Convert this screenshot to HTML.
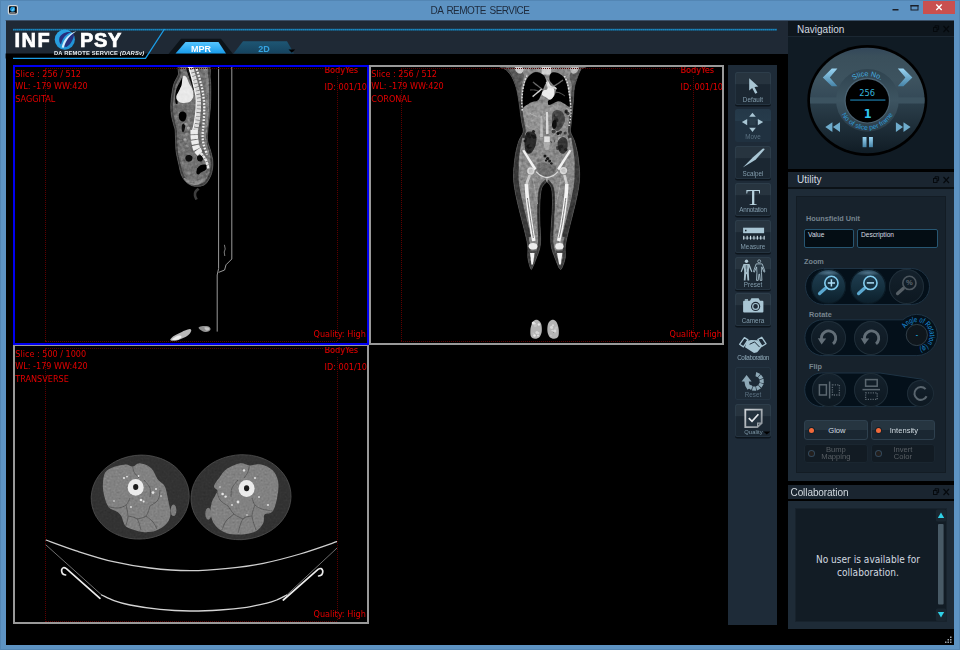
<!DOCTYPE html>
<html lang="en">
<head>
<meta charset="utf-8">
<title>DA REMOTE SERVICE</title>
<style>
*{box-sizing:border-box;margin:0;padding:0}
html,body{width:960px;height:650px;overflow:hidden;background:#5d93c3;font-family:"Liberation Sans",sans-serif}
.abs{position:absolute}
#win{position:absolute;left:0;top:0;width:960px;height:650px;background:#5d93c3;overflow:hidden;box-shadow:inset 0 0 0 1px #5386b4}
#client{position:absolute;left:5.6px;top:21px;width:948.4px;height:624px;background:#000}
#header{position:absolute;left:5.6px;top:21px;width:782.4px;height:32.6px;background:#1f2935}

#titletext{position:absolute;left:0;top:4.5px;width:960px;text-align:center;font-size:10px;line-height:12px;color:#1d2a3c;letter-spacing:-0.55px;word-spacing:1.4px}
#hdrsvg{position:absolute;left:0;top:0}
.logo{position:absolute;color:#fff;-webkit-text-stroke:0.7px #fff;font-weight:700;font-size:20px;line-height:20px;letter-spacing:1.5px;top:29.5px}
#sub{position:absolute;left:54px;top:49.5px;color:#e8eef2;font-weight:700;font-size:5.8px;line-height:7px;letter-spacing:0.15px;white-space:nowrap}
.tabt{position:absolute;font-weight:700;font-size:9px;line-height:10px;top:43.5px;text-align:center}
/* viewports */
.vp{position:absolute;background:#000;border:2px solid #999;overflow:hidden}
.vp.sel{border-color:#0000f0}
.vp .t{position:absolute;color:#e40000;font-size:9px;line-height:11px;white-space:nowrap;font-family:"DejaVu Sans Condensed","DejaVu Sans","Liberation Sans",sans-serif}
.vp .dl{position:absolute;border-left:1px dotted #5c0000;top:2px;bottom:2px;width:0}
.vp .dh{position:absolute;border-top:1px dotted #5c0000;left:30px;right:30px;height:0}
.vp svg{position:absolute;left:0;top:0}
/* toolbar */
#toolbar{position:absolute;left:728px;top:65px;width:49px;height:560px;background:#1e2b38}
.tb{position:absolute;left:735px;width:36px;height:33px;border-radius:2.5px;background:linear-gradient(#27343f 0,#27343f 37%,#1b2732 38%,#1b2732 100%);box-shadow:inset 0 0 0 1px rgba(70,95,112,0.22),0 1.5px 0 #0d151c}
.tb.flat{background:linear-gradient(#243848 0,#263b4b 36%,#203140 37%,#203140 100%);box-shadow:none}
.tb.dis{background:#1d2a36;box-shadow:inset 0 0 0 1px rgba(50,70,86,0.35)}
.tb.none{background:none;box-shadow:none}
.tb span{position:absolute;left:-8px;right:-8px;bottom:2.3px;text-align:center;font-size:6.3px;color:#849eae;line-height:6px;white-space:nowrap;letter-spacing:0.05px}
.tb.flat span,.tb.dis span{color:#5a7080}
.tb svg{position:absolute;left:0;top:0}
/* dock */
.dock{position:absolute;left:788px;width:166px;background:#1e2b37}
.dtitle{position:absolute;left:788px;width:166px;height:16px;background:#1a2530;color:#d3dae0;font-size:10px;line-height:15px;padding-left:9px;white-space:nowrap}
.dtitle svg{position:absolute;right:3px;top:4px}
.lbl{position:absolute;font-weight:700;font-size:7.3px;line-height:8px;color:#76848f;white-space:nowrap}
.tbox{position:absolute;height:19px;border:1px solid #275672;border-radius:2px;background:#040d14;color:#d6dde2;font-size:6.6px;line-height:8px;padding:1px 0 0 3px}
.pill{position:absolute;background:#04101a;border:1px solid #1e3344}
.cb{position:absolute;border-radius:50%}
.cb.on{background:radial-gradient(ellipse 38% 9% at 50% 11%,rgba(120,160,185,0.55),rgba(120,160,185,0) 100%),linear-gradient(#224054 0,#15303f 55%,#0c1e2a 100%);box-shadow:inset 0 0 0 1px rgba(10,24,34,0.9)}
.cb.off{background:linear-gradient(#14212c,#0d1821);box-shadow:inset 0 0 0 1px #1f2e39}
.cb svg{position:absolute;left:0;top:0}
.ub{position:absolute;height:20px;border-radius:3px;font-size:7.6px;line-height:8px;text-align:center;white-space:nowrap}
.ub.on{background:linear-gradient(#263540 0,#263540 50%,#1a2732 51%,#1a2732 100%);border:1px solid #2e404e;color:#d0dae0}
.ub.off{background:#121b23;border:1px solid #1a2630;color:#595f64}
.ub i{position:absolute;left:3.6px;top:6.4px;width:5px;height:5px;border-radius:50%}
.ub.on i{background:#f26a3a;box-shadow:0 0 0 1px #14202a}
.ub.off i{background:#231f1d;box-shadow:0 0 0 1px #33485a}
</style>
</head>
<body>
<div id="win">
  <div id="titletext">DA REMOTE SERVICE</div>
  <div id="client"></div>
  <div id="header"></div>
  <svg id="hdrsvg" width="960" height="66" viewBox="0 0 960 66">
    <defs>
      <linearGradient id="gMpr" x1="0" y1="0" x2="0" y2="1"><stop offset="0" stop-color="#56c6ff"/><stop offset="1" stop-color="#189ae8"/></linearGradient>
      <linearGradient id="g2d" x1="0" y1="0" x2="0" y2="1"><stop offset="0" stop-color="#1e5674"/><stop offset="1" stop-color="#16435e"/></linearGradient>
      <linearGradient id="gO" x1="0" y1="0" x2="1" y2="1"><stop offset="0" stop-color="#2ea7e6"/><stop offset="1" stop-color="#1d8fd2"/></linearGradient>
    </defs>
    <!-- window icon -->
    <rect x="8.4" y="5.6" width="9" height="8.6" rx="1.6" fill="#04070a" stroke="#d3d8dc" stroke-width="1.2"/>
    <circle cx="12.6" cy="9.2" r="2.5" fill="#1c94d8"/><path d="M11.2 10.6 L14.8 7 L13.2 10.9 Z" fill="#6fd0f8"/>
    <rect x="9.6" y="12.2" width="5.8" height="0.8" fill="#8a9096"/>
    <!-- window buttons -->
    <rect x="892.5" y="9" width="6" height="1.5" fill="#1a1f28"/>
    <rect x="911" y="5.5" width="7" height="4.5" fill="none" stroke="#1a1f28" stroke-width="1"/><rect x="910.5" y="5" width="8" height="1.5" fill="#1a1f28"/>
    <rect x="923" y="1" width="32" height="13" fill="#c9504f"/>
    <path d="M936.3 4.6 L941.7 10 M941.7 4.6 L936.3 10" stroke="#fff" stroke-width="1.4" fill="none"/>
    <rect x="5.6" y="20" width="948.4" height="1" fill="#3a5068"/>
    <!-- black strip under logo -->
    <polygon points="5.6,53.6 148,53.6 145,58.5 5.6,58.5" fill="#000"/>
    <!-- thin dashed blue line -->
    <line x1="13" y1="29.6" x2="777" y2="29.6" stroke="#176c9a" stroke-width="1.9"/><line x1="13" y1="29.6" x2="777" y2="29.6" stroke="#1c86bd" stroke-width="1.1" stroke-dasharray="1.2 0.8"/>
    <!-- logo outline -->
    <path d="M164.5 29 L145.5 58.3 L13 58.3" stroke="#1b9ee8" stroke-width="1.3" fill="none"/>
    <!-- O emblem -->
    <circle cx="64.8" cy="39.6" r="10.1" fill="url(#gO)"/>
    <path d="M59.5 37.5 C62 33 67 31.6 71 32.2 C66 33.8 62.5 38 61 44.5 C59.2 42.6 58.7 40 59.5 37.5 Z" fill="#27307e"/>
    <path d="M64 46.6 C64.8 41.5 68.5 35.8 74 33 C74.5 37.5 71 44.5 66.5 47 Z" fill="#27307e"/>
    <path d="M76.5 31.3 C69.5 33 63.5 39 61.6 47.6 L63.8 47.8 C65.8 40.5 70 34.8 76.5 31.3 Z" fill="#cfeeff"/>
    <!-- tabs -->
    <polygon points="168.5,54 181,38.8 221,38.8 233,54" fill="#0c1319"/>
    <polygon points="175.5,53.6 185.5,42 218.5,42 226,53.6" fill="url(#gMpr)"/>
    <polygon points="233.5,53.6 243,41.3 287,41.3 294,53.6" fill="url(#g2d)"/>
    <polygon points="288.5,49.6 295.2,49.6 291.8,52.8" fill="#000"/>
  </svg>
  <div class="logo" style="left:14.5px">INF</div>
  <div class="logo" style="left:80px;letter-spacing:0.6px">PSY</div>
  <div id="sub">DA REMOTE SERVICE <i>(DARSv)</i></div>
  <div class="tabt" style="left:186px;width:30px;color:#fff">MPR</div>
  <div class="tabt" style="left:249px;width:30px;color:#35a4e2">2D</div>

  <!-- SAGITTAL -->
  <div class="vp sel" id="vp1" style="left:13px;top:65px;width:356px;height:280px">
    <!--SVG1--><svg width="352" height="276" viewBox="15 67 352 276"><defs><filter id="s1b" x="-0.1" y="-0.1" width="1.2" height="1.2"><feGaussianBlur stdDeviation="0.65"/></filter><filter id="s1n" x="0" y="0" width="1" height="1" color-interpolation-filters="sRGB"><feTurbulence type="fractalNoise" baseFrequency="0.32" numOctaves="2" seed="4"/><feColorMatrix values="0.6 0.6 0.6 0 -0.4 0.6 0.6 0.6 0 -0.4 0.6 0.6 0.6 0 -0.4 0 0 0 0 1"/></filter><clipPath id="s1clip"><path d="M180.5 64.0 C175.7 65.8 179.4 71.6 178.3 74.8 C177.2 78.0 175.1 80.2 174.0 83.4 C172.9 86.6 172.3 90.5 171.8 94.1 C171.3 97.7 170.9 101.5 170.8 104.9 C170.7 108.3 170.9 111.4 171.3 114.6 C171.8 117.8 172.9 121.7 173.5 124.3 C174.1 126.9 174.8 127.2 175.1 130.0 C175.4 132.8 175.4 137.2 175.6 140.8 C175.8 144.4 175.6 147.6 176.1 151.5 C176.6 155.4 177.9 160.5 178.8 164.4 C179.7 168.3 180.2 172.1 181.5 175.2 C182.8 178.2 184.8 180.9 186.9 182.7 C189.1 184.5 191.7 185.8 194.4 186.2 C197.1 186.6 200.8 186.2 203.0 185.4 C205.2 184.6 206.4 183.3 207.8 181.2 C209.2 179.1 210.8 176.2 211.7 173.0 C212.5 169.8 213.1 165.9 212.9 162.3 C212.8 158.7 211.7 155.1 210.8 151.5 C209.9 147.9 208.1 144.4 207.6 140.8 C207.1 137.2 207.7 133.5 207.9 130.0 C208.1 126.5 208.6 123.8 209.0 120.0 C209.4 116.2 210.1 111.8 210.4 107.0 C210.7 102.2 210.8 95.7 210.8 90.9 C210.8 86.1 210.8 82.5 210.2 78.0 C209.6 73.5 212.3 66.3 207.4 64.0 C202.5 61.7 185.3 62.2 180.5 64.0Z"/></clipPath></defs><g filter="url(#s1b)"><path d="M180.5 64.0 C175.7 65.8 179.4 71.6 178.3 74.8 C177.2 78.0 175.1 80.2 174.0 83.4 C172.9 86.6 172.3 90.5 171.8 94.1 C171.3 97.7 170.9 101.5 170.8 104.9 C170.7 108.3 170.9 111.4 171.3 114.6 C171.8 117.8 172.9 121.7 173.5 124.3 C174.1 126.9 174.8 127.2 175.1 130.0 C175.4 132.8 175.4 137.2 175.6 140.8 C175.8 144.4 175.6 147.6 176.1 151.5 C176.6 155.4 177.9 160.5 178.8 164.4 C179.7 168.3 180.2 172.1 181.5 175.2 C182.8 178.2 184.8 180.9 186.9 182.7 C189.1 184.5 191.7 185.8 194.4 186.2 C197.1 186.6 200.8 186.2 203.0 185.4 C205.2 184.6 206.4 183.3 207.8 181.2 C209.2 179.1 210.8 176.2 211.7 173.0 C212.5 169.8 213.1 165.9 212.9 162.3 C212.8 158.7 211.7 155.1 210.8 151.5 C209.9 147.9 208.1 144.4 207.6 140.8 C207.1 137.2 207.7 133.5 207.9 130.0 C208.1 126.5 208.6 123.8 209.0 120.0 C209.4 116.2 210.1 111.8 210.4 107.0 C210.7 102.2 210.8 95.7 210.8 90.9 C210.8 86.1 210.8 82.5 210.2 78.0 C209.6 73.5 212.3 66.3 207.4 64.0 C202.5 61.7 185.3 62.2 180.5 64.0Z" fill="#6f6f6f"/><g clip-path="url(#s1clip)"><path d="M180.5 64.0 C175.7 65.8 179.4 71.6 178.3 74.8 C177.2 78.0 175.1 80.2 174.0 83.4 C172.9 86.6 172.3 90.5 171.8 94.1 C171.3 97.7 170.9 101.5 170.8 104.9 C170.7 108.3 170.9 111.4 171.3 114.6 C171.8 117.8 172.9 121.7 173.5 124.3 C174.1 126.9 174.8 127.2 175.1 130.0 C175.4 132.8 175.4 137.2 175.6 140.8 C175.8 144.4 175.6 147.6 176.1 151.5 C176.6 155.4 177.9 160.5 178.8 164.4 C179.7 168.3 180.2 172.1 181.5 175.2 C182.8 178.2 184.8 180.9 186.9 182.7 C189.1 184.5 191.7 185.8 194.4 186.2 C197.1 186.6 200.8 186.2 203.0 185.4 C205.2 184.6 206.4 183.3 207.8 181.2 C209.2 179.1 210.8 176.2 211.7 173.0 C212.5 169.8 213.1 165.9 212.9 162.3 C212.8 158.7 211.7 155.1 210.8 151.5 C209.9 147.9 208.1 144.4 207.6 140.8 C207.1 137.2 207.7 133.5 207.9 130.0 C208.1 126.5 208.6 123.8 209.0 120.0 C209.4 116.2 210.1 111.8 210.4 107.0 C210.7 102.2 210.8 95.7 210.8 90.9 C210.8 86.1 210.8 82.5 210.2 78.0 C209.6 73.5 212.3 66.3 207.4 64.0 C202.5 61.7 185.3 62.2 180.5 64.0Z" fill="none" stroke="#3f3f3f" stroke-width="4.4"/><path d="M205.0 66.0 C205.3 68.3 206.6 75.2 207.0 80.0 C207.4 84.8 207.3 90.0 207.4 95.0 C207.5 100.0 207.6 105.0 207.4 110.0 C207.2 115.0 206.7 120.3 206.2 125.0 C205.7 129.7 204.6 134.2 204.6 138.0 C204.6 141.8 205.7 144.7 206.4 148.0 C207.1 151.3 208.6 156.3 209.0 158.0" fill="none" stroke="#7c7c7c" stroke-width="3.4"/><path d="M174.2 100.0 C174.3 102.5 174.2 110.0 174.8 115.0 C175.4 120.0 177.0 125.0 177.6 130.0 C178.2 135.0 177.9 140.7 178.2 145.0 C178.5 149.3 178.7 152.2 179.4 156.0 C180.1 159.8 181.3 164.5 182.4 168.0 C183.5 171.5 185.4 175.5 186.0 177.0" fill="none" stroke="#6a6a6a" stroke-width="1.6"/><path d="M182.4 77.2 C181.9 77.5 181.4 79.1 180.4 81.0 C179.4 82.9 177.5 86.1 176.6 88.6 C175.7 91.1 175.4 93.6 175.2 96.0 C175.0 98.4 175.2 101.8 175.6 103.0 C176.0 104.2 177.3 104.4 177.6 103.4 C177.9 102.4 177.1 99.2 177.4 97.0 C177.7 94.8 178.7 92.2 179.6 90.0 C180.5 87.8 181.9 85.8 182.6 84.0 C183.3 82.2 183.6 80.1 183.6 79.0 C183.6 77.9 182.9 76.9 182.4 77.2Z" fill="#050505"/><path d="M186.4 69.0 C186.3 70.2 187.8 73.5 188.6 76.0 C189.4 78.5 190.6 81.7 191.4 84.0 C192.2 86.3 192.9 89.7 193.4 90.0 C193.9 90.3 194.8 88.0 194.6 86.0 C194.4 84.0 192.9 80.8 192.0 78.0 C191.1 75.2 190.3 70.5 189.4 69.0 C188.5 67.5 186.5 67.8 186.4 69.0Z" fill="#0a0a0a"/><path d="M183.2 76.0 C183.9 75.5 185.4 75.8 186.4 77.0 C187.4 78.2 188.2 81.4 189.2 83.4 C190.2 85.4 191.6 86.7 192.3 88.8 C193.0 90.9 193.6 94.3 193.4 96.3 C193.2 98.3 192.1 99.5 191.2 100.6 C190.3 101.6 189.6 102.2 188.0 102.6 C186.4 103.0 183.3 103.1 181.5 102.8 C179.7 102.5 178.3 101.7 177.4 100.6 C176.5 99.5 176.1 97.7 176.3 96.3 C176.5 94.9 177.5 93.8 178.4 92.0 C179.3 90.2 180.9 87.5 181.5 85.5 C182.1 83.5 181.9 81.8 182.2 80.2 C182.5 78.6 182.5 76.5 183.2 76.0Z" fill="#e9e9e9"/><path d="M176.4 104.4 C177.6 103.2 181.4 104.2 184.0 104.0 C186.6 103.8 190.6 102.7 192.0 103.4 C193.4 104.1 192.9 106.6 192.6 108.0 C192.3 109.4 191.4 111.4 190.0 112.0 C188.6 112.6 186.2 111.7 184.0 111.6 C181.8 111.5 178.3 112.6 177.0 111.4 C175.7 110.2 175.2 105.6 176.4 104.4Z" fill="#6c6c6c"/><path d="M180.0 112.4 C180.9 111.7 182.9 111.4 184.0 111.8 C185.1 112.2 186.1 113.3 186.4 114.6 C186.7 115.9 186.2 118.2 185.6 119.4 C185.0 120.6 184.0 121.5 183.0 121.6 C182.0 121.7 180.5 120.9 179.8 120.0 C179.1 119.1 178.8 117.3 178.8 116.0 C178.8 114.7 179.1 113.1 180.0 112.4Z" fill="#030303"/><path d="M182.6 124.0 C183.2 123.5 184.7 124.0 185.0 125.0 C185.3 126.0 185.0 128.8 184.6 130.0 C184.2 131.2 183.1 132.3 182.6 132.0 C182.1 131.7 181.6 129.3 181.6 128.0 C181.6 126.7 182.0 124.5 182.6 124.0Z" fill="#101010"/><circle cx="186.0" cy="124.0" r="1.6" fill="#a0a0a0"/><circle cx="188.4" cy="128.0" r="1.5" fill="#b4b4b4"/><circle cx="187.0" cy="134.0" r="1.8" fill="#8e8e8e"/><circle cx="185.0" cy="140.0" r="1.7" fill="#9a9a9a"/><circle cx="187.2" cy="146.0" r="1.6" fill="#8a8a8a"/><circle cx="183.0" cy="150.0" r="1.8" fill="#808080"/><circle cx="189.0" cy="120.0" r="1.4" fill="#909090"/><path d="M186.0 156.0 C186.7 155.2 188.5 154.8 189.6 155.0 C190.7 155.2 192.1 156.1 192.4 157.0 C192.7 157.9 192.3 159.8 191.6 160.6 C190.9 161.4 189.0 161.8 188.0 161.6 C187.0 161.4 185.9 160.5 185.6 159.6 C185.3 158.7 185.3 156.8 186.0 156.0Z" fill="#080808"/><path d="M197.6 156.0 C198.3 155.5 200.1 155.1 201.0 155.4 C201.9 155.7 203.1 157.0 203.2 158.0 C203.3 159.0 202.4 160.7 201.6 161.2 C200.8 161.7 199.2 161.4 198.4 161.0 C197.6 160.6 197.1 159.4 197.0 158.6 C196.9 157.8 196.9 156.5 197.6 156.0Z" fill="#0c0c0c"/><path d="M200.4 165.2 C201.7 164.5 203.8 164.4 205.0 164.6 C206.2 164.8 207.3 165.7 207.4 166.6 C207.5 167.5 206.7 169.0 205.6 170.0 C204.5 171.0 202.2 171.8 201.0 172.6 C199.8 173.4 199.2 174.6 198.4 174.6 C197.6 174.6 196.6 173.6 196.4 172.6 C196.2 171.6 196.3 169.8 197.0 168.6 C197.7 167.4 199.1 165.9 200.4 165.2Z" fill="#050505"/><path d="M185.4 164.0 C186.3 163.1 188.2 162.6 190.0 162.6 C191.8 162.6 194.9 162.8 196.0 164.0 C197.1 165.2 196.6 168.1 196.4 170.0 C196.2 171.9 195.7 174.4 194.6 175.6 C193.5 176.8 191.5 177.3 190.0 177.0 C188.5 176.7 186.5 175.5 185.6 174.0 C184.7 172.5 184.6 169.7 184.6 168.0 C184.6 166.3 184.5 164.9 185.4 164.0Z" fill="#737373"/><path d="M184.0 178.0 C184.7 177.8 187.8 180.0 190.0 180.4 C192.2 180.8 194.7 181.1 197.0 180.6 C199.3 180.1 202.7 177.5 204.0 177.4 C205.3 177.3 205.8 178.8 205.0 180.0 C204.2 181.2 201.3 183.6 199.0 184.4 C196.7 185.2 193.2 185.1 191.0 184.6 C188.8 184.1 186.8 182.5 185.6 181.4 C184.4 180.3 183.3 178.2 184.0 178.0Z" fill="#8a8a8a"/><path d="M190.6 66.0 C191.0 67.3 192.1 70.8 193.0 74.0 C193.9 77.2 195.3 81.8 196.2 85.5 C197.1 89.2 198.1 92.7 198.6 96.3 C199.1 99.9 199.1 103.0 198.9 107.0 C198.7 111.0 198.1 116.2 197.6 120.0 C197.1 123.8 196.1 128.3 195.8 130.0" fill="none" stroke="#dcdcdc" stroke-width="4.6" stroke-dasharray="3 0.7"/><path d="M188.4 66.0 C188.8 67.3 189.9 70.8 190.8 74.0 C191.7 77.2 192.7 81.8 193.6 85.5 C194.5 89.2 195.6 92.7 196.0 96.3 C196.4 99.9 196.4 103.0 196.2 107.0 C196.0 111.0 195.4 115.8 194.8 120.0 C194.2 124.2 192.8 130.0 192.4 132.0" fill="none" stroke="#f2f2f2" stroke-width="1.3"/><path d="M194.2 130.0 C194.2 131.0 194.1 134.0 194.2 136.0 C194.3 138.0 194.6 139.8 195.0 142.0 C195.4 144.2 195.9 147.1 196.8 149.0 C197.7 150.9 200.0 152.8 200.6 153.6" fill="none" stroke="#ededed" stroke-width="7.4" stroke-dasharray="4.2 0.9"/><path d="M200.6 153.0 C201.2 153.8 203.3 155.9 204.4 157.6 C205.5 159.3 206.4 161.1 207.0 163.0 C207.6 164.9 208.0 168.0 208.2 169.0" fill="none" stroke="#e4e4e4" stroke-width="2.6" stroke-dasharray="3 0.6"/><path d="M194.0 66.0 C194.6 68.0 196.5 74.0 197.6 78.0 C198.7 82.0 199.9 85.8 200.6 90.0 C201.3 94.2 201.7 98.3 201.8 103.0 C201.9 107.7 201.6 113.3 201.2 118.0 C200.8 122.7 199.7 127.2 199.4 131.0 C199.1 134.8 199.2 138.0 199.6 141.0 C200.0 144.0 201.0 146.6 202.0 149.0 C203.0 151.4 204.8 154.5 205.4 155.6" fill="none" stroke="#6a6a6a" stroke-width="1.4"/><path d="M196.6 69.0 C197.1 70.5 198.5 74.8 199.4 78.0 C200.3 81.2 201.3 84.7 202.0 88.0 C202.7 91.3 203.2 94.7 203.6 98.0 C204.0 101.3 204.3 104.3 204.3 108.0 C204.3 111.7 204.0 116.2 203.8 120.0 C203.6 123.8 203.1 127.8 202.9 131.0 C202.7 134.2 202.5 136.3 202.7 139.0 C202.9 141.7 203.6 144.4 204.3 147.0 C205.0 149.6 206.6 153.3 207.0 154.6" fill="none" stroke="#f0f0f0" stroke-width="2.3" stroke-dasharray="1.7 1.5"/></g><path d="M180.5 64.0 C175.7 65.8 179.4 71.6 178.3 74.8 C177.2 78.0 175.1 80.2 174.0 83.4 C172.9 86.6 172.3 90.5 171.8 94.1 C171.3 97.7 170.9 101.5 170.8 104.9 C170.7 108.3 170.9 111.4 171.3 114.6 C171.8 117.8 172.9 121.7 173.5 124.3 C174.1 126.9 174.8 127.2 175.1 130.0 C175.4 132.8 175.4 137.2 175.6 140.8 C175.8 144.4 175.6 147.6 176.1 151.5 C176.6 155.4 177.9 160.5 178.8 164.4 C179.7 168.3 180.2 172.1 181.5 175.2 C182.8 178.2 184.8 180.9 186.9 182.7 C189.1 184.5 191.7 185.8 194.4 186.2 C197.1 186.6 200.8 186.2 203.0 185.4 C205.2 184.6 206.4 183.3 207.8 181.2 C209.2 179.1 210.8 176.2 211.7 173.0 C212.5 169.8 213.1 165.9 212.9 162.3 C212.8 158.7 211.7 155.1 210.8 151.5 C209.9 147.9 208.1 144.4 207.6 140.8 C207.1 137.2 207.7 133.5 207.9 130.0 C208.1 126.5 208.6 123.8 209.0 120.0 C209.4 116.2 210.1 111.8 210.4 107.0 C210.7 102.2 210.8 95.7 210.8 90.9 C210.8 86.1 210.8 82.5 210.2 78.0 C209.6 73.5 212.3 66.3 207.4 64.0 C202.5 61.7 185.3 62.2 180.5 64.0Z" fill="none" stroke="#5e5e5e" stroke-width="0.7"/><path d="M198.6 188.6 C198.1 189.1 196.2 190.4 195.6 191.6 C195.0 192.8 194.8 194.3 195.0 195.6 C195.2 196.9 196.3 198.9 196.6 199.6" fill="none" stroke="#3e3e3e" stroke-width="2.6"/><path d="M170.2 340.0 C169.9 339.3 171.6 337.5 173.0 336.4 C174.4 335.3 176.6 334.4 178.6 333.4 C180.6 332.4 183.1 331.1 185.0 330.4 C186.9 329.7 189.0 328.9 190.0 329.0 C191.0 329.1 191.5 330.0 191.2 331.0 C190.9 332.0 189.9 333.7 188.4 335.0 C186.9 336.3 184.2 337.6 182.0 338.6 C179.8 339.6 177.0 340.6 175.0 340.8 C173.0 341.0 170.5 340.7 170.2 340.0Z" fill="#b8b8b8"/><path d="M172.0 339.6 C171.8 339.1 174.3 337.5 175.6 336.8 C176.9 336.1 179.0 335.5 180.0 335.6 C181.0 335.7 181.9 336.7 181.4 337.4 C180.9 338.1 178.6 339.4 177.0 339.8 C175.4 340.2 172.2 340.1 172.0 339.6Z" fill="#ededed"/><path d="M198.6 327.4 C199.0 326.7 201.3 326.2 203.0 326.0 C204.7 325.8 207.3 325.9 208.6 326.4 C209.9 326.9 210.6 328.1 210.6 329.0 C210.6 329.9 209.5 331.1 208.4 331.6 C207.3 332.1 205.3 332.1 204.0 331.8 C202.7 331.5 201.5 330.7 200.6 330.0 C199.7 329.3 198.2 328.1 198.6 327.4Z" fill="#8f8f8f"/><path d="M204.4 327.6 C204.7 327.1 207.6 327.3 208.4 327.6 C209.2 327.9 209.7 329.1 209.4 329.6 C209.1 330.1 207.2 330.9 206.4 330.6 C205.6 330.3 204.1 328.1 204.4 327.6Z" fill="#c4c4c4"/></g><rect x="165" y="67" width="52" height="124" clip-path="url(#s1clip)" filter="url(#s1n)" opacity="0.3" style="mix-blend-mode:overlay"/><g fill="none" stroke="#9a9a9a" stroke-width="1"><path d="M218.6 67 V268.6 L217.2 275 V331.6"/><path d="M231.8 67 V259 L226 264.8 L224.6 270 L218.6 272.4"/><path d="M224.4 244.8 L225.2 249 L224.2 252 L224.8 256" stroke="#7a7a7a"/></g></svg><!--/SVG1-->
    <div class="dl" style="left:30px"></div><div class="dl" style="left:322px"></div>
    <div class="dh" style="top:1px"></div><div class="dh" style="top:274px"></div>
    <div class="t" style="left:0.3px;top:2.2px">Slice : 256 / 512</div>
    <div class="t" style="left:0.3px;top:14.2px">WL: -179 WW:420</div>
    <div class="t" style="left:0.3px;top:27.2px">SAGGITAL</div>
    <div class="t" style="left:309.3px;top:-1.7px;background:#000">BodyYes</div>
    <div class="t" style="left:309.6px;top:15.3px">ID: 001/10</div>
    <div class="t" style="left:298.6px;top:262px">Quality: High</div>
  </div>
  <!-- CORONAL -->
  <div class="vp" id="vp2" style="left:369px;top:65px;width:355px;height:280px">
    <!--SVG2--><svg width="351" height="276" viewBox="371 67 351 276"><defs><filter id="s2b" x="-0.1" y="-0.1" width="1.2" height="1.2"><feGaussianBlur stdDeviation="0.7"/></filter><filter id="s2n" x="0" y="0" width="1" height="1" color-interpolation-filters="sRGB"><feTurbulence type="fractalNoise" baseFrequency="0.32" numOctaves="2" seed="9"/><feColorMatrix values="0.6 0.6 0.6 0 -0.4 0.6 0.6 0.6 0 -0.4 0.6 0.6 0.6 0 -0.4 0 0 0 0 1"/></filter><clipPath id="s2clip"><path d="M503.2 64.0 C490.4 65.1 505.6 68.3 507.0 70.5 C508.4 72.7 510.4 74.0 511.9 76.9 C513.4 79.8 515.0 83.6 516.2 87.7 C517.4 91.8 518.2 97.4 518.9 101.7 C519.6 106.0 520.0 109.8 520.5 113.6 C521.0 117.4 521.6 121.2 522.1 124.3 C522.6 127.4 523.7 129.2 523.2 132.0 C522.7 134.8 520.2 137.2 518.9 140.8 C517.6 144.4 516.4 149.4 515.6 153.7 C514.8 158.0 514.4 162.9 514.0 166.6 C513.6 170.3 513.4 172.6 513.5 176.0 C513.6 179.4 513.7 182.2 514.4 186.9 C515.1 191.6 516.5 198.2 517.8 203.9 C519.1 209.6 520.6 215.2 522.0 220.8 C523.4 226.4 525.2 233.2 526.2 237.7 C527.2 242.2 527.6 244.5 527.9 247.9 C528.2 251.3 527.5 254.6 527.9 258.0 C528.3 261.4 529.8 266.5 530.5 268.2 C531.2 269.9 531.2 269.9 532.2 268.2 C533.2 266.5 535.1 261.4 536.4 258.0 C537.7 254.6 539.1 251.3 539.8 247.9 C540.5 244.5 540.6 242.2 540.6 237.7 C540.6 233.2 539.9 226.4 539.8 220.8 C539.7 215.2 539.5 209.3 539.8 203.9 C540.1 198.5 540.5 192.2 541.5 188.6 C542.5 185.0 544.9 183.4 545.9 182.4 C546.9 181.4 546.6 181.4 547.6 182.4 C548.6 183.4 550.8 185.0 551.6 188.6 C552.4 192.2 552.5 198.5 552.5 203.9 C552.5 209.3 551.9 215.2 551.6 220.8 C551.3 226.4 550.8 233.2 550.8 237.7 C550.8 242.2 550.9 244.5 551.6 247.9 C552.3 251.3 553.7 254.6 555.0 258.0 C556.3 261.4 558.2 266.5 559.3 268.2 C560.4 269.9 560.8 269.9 561.8 268.2 C562.8 266.5 564.6 261.4 565.2 258.0 C565.8 254.6 564.9 251.3 565.2 247.9 C565.5 244.5 565.9 242.2 566.9 237.7 C567.9 233.2 569.7 226.4 571.1 220.8 C572.5 215.2 574.0 209.6 575.3 203.9 C576.6 198.2 578.0 191.6 578.7 186.9 C579.4 182.2 579.5 179.4 579.6 176.0 C579.7 172.6 579.5 170.3 579.2 166.6 C578.9 162.9 578.4 158.0 577.6 153.7 C576.8 149.4 575.6 144.4 574.4 140.8 C573.2 137.2 571.1 134.8 570.6 132.0 C570.1 129.2 570.8 127.4 571.1 124.3 C571.4 121.2 571.8 117.4 572.2 113.6 C572.6 109.8 572.9 106.0 573.3 101.7 C573.7 97.4 573.7 91.8 574.4 87.7 C575.1 83.6 576.5 80.0 577.6 76.9 C578.7 73.9 579.7 71.6 580.8 69.4 C581.9 67.2 596.9 64.9 584.0 64.0 C571.1 63.1 516.0 62.9 503.2 64.0Z"/></clipPath></defs><g filter="url(#s2b)"><path d="M503.2 64.0 C490.4 65.1 505.6 68.3 507.0 70.5 C508.4 72.7 510.4 74.0 511.9 76.9 C513.4 79.8 515.0 83.6 516.2 87.7 C517.4 91.8 518.2 97.4 518.9 101.7 C519.6 106.0 520.0 109.8 520.5 113.6 C521.0 117.4 521.6 121.2 522.1 124.3 C522.6 127.4 523.7 129.2 523.2 132.0 C522.7 134.8 520.2 137.2 518.9 140.8 C517.6 144.4 516.4 149.4 515.6 153.7 C514.8 158.0 514.4 162.9 514.0 166.6 C513.6 170.3 513.4 172.6 513.5 176.0 C513.6 179.4 513.7 182.2 514.4 186.9 C515.1 191.6 516.5 198.2 517.8 203.9 C519.1 209.6 520.6 215.2 522.0 220.8 C523.4 226.4 525.2 233.2 526.2 237.7 C527.2 242.2 527.6 244.5 527.9 247.9 C528.2 251.3 527.5 254.6 527.9 258.0 C528.3 261.4 529.8 266.5 530.5 268.2 C531.2 269.9 531.2 269.9 532.2 268.2 C533.2 266.5 535.1 261.4 536.4 258.0 C537.7 254.6 539.1 251.3 539.8 247.9 C540.5 244.5 540.6 242.2 540.6 237.7 C540.6 233.2 539.9 226.4 539.8 220.8 C539.7 215.2 539.5 209.3 539.8 203.9 C540.1 198.5 540.5 192.2 541.5 188.6 C542.5 185.0 544.9 183.4 545.9 182.4 C546.9 181.4 546.6 181.4 547.6 182.4 C548.6 183.4 550.8 185.0 551.6 188.6 C552.4 192.2 552.5 198.5 552.5 203.9 C552.5 209.3 551.9 215.2 551.6 220.8 C551.3 226.4 550.8 233.2 550.8 237.7 C550.8 242.2 550.9 244.5 551.6 247.9 C552.3 251.3 553.7 254.6 555.0 258.0 C556.3 261.4 558.2 266.5 559.3 268.2 C560.4 269.9 560.8 269.9 561.8 268.2 C562.8 266.5 564.6 261.4 565.2 258.0 C565.8 254.6 564.9 251.3 565.2 247.9 C565.5 244.5 565.9 242.2 566.9 237.7 C567.9 233.2 569.7 226.4 571.1 220.8 C572.5 215.2 574.0 209.6 575.3 203.9 C576.6 198.2 578.0 191.6 578.7 186.9 C579.4 182.2 579.5 179.4 579.6 176.0 C579.7 172.6 579.5 170.3 579.2 166.6 C578.9 162.9 578.4 158.0 577.6 153.7 C576.8 149.4 575.6 144.4 574.4 140.8 C573.2 137.2 571.1 134.8 570.6 132.0 C570.1 129.2 570.8 127.4 571.1 124.3 C571.4 121.2 571.8 117.4 572.2 113.6 C572.6 109.8 572.9 106.0 573.3 101.7 C573.7 97.4 573.7 91.8 574.4 87.7 C575.1 83.6 576.5 80.0 577.6 76.9 C578.7 73.9 579.7 71.6 580.8 69.4 C581.9 67.2 596.9 64.9 584.0 64.0 C571.1 63.1 516.0 62.9 503.2 64.0Z" fill="#888888"/><g clip-path="url(#s2clip)"><path d="M503.2 64.0 C490.4 65.1 505.6 68.3 507.0 70.5 C508.4 72.7 510.4 74.0 511.9 76.9 C513.4 79.8 515.0 83.6 516.2 87.7 C517.4 91.8 518.2 97.4 518.9 101.7 C519.6 106.0 520.0 109.8 520.5 113.6 C521.0 117.4 521.6 121.2 522.1 124.3 C522.6 127.4 523.7 129.2 523.2 132.0 C522.7 134.8 520.2 137.2 518.9 140.8 C517.6 144.4 516.4 149.4 515.6 153.7 C514.8 158.0 514.4 162.9 514.0 166.6 C513.6 170.3 513.4 172.6 513.5 176.0 C513.6 179.4 513.7 182.2 514.4 186.9 C515.1 191.6 516.5 198.2 517.8 203.9 C519.1 209.6 520.6 215.2 522.0 220.8 C523.4 226.4 525.2 233.2 526.2 237.7 C527.2 242.2 527.6 244.5 527.9 247.9 C528.2 251.3 527.5 254.6 527.9 258.0 C528.3 261.4 529.8 266.5 530.5 268.2 C531.2 269.9 531.2 269.9 532.2 268.2 C533.2 266.5 535.1 261.4 536.4 258.0 C537.7 254.6 539.1 251.3 539.8 247.9 C540.5 244.5 540.6 242.2 540.6 237.7 C540.6 233.2 539.9 226.4 539.8 220.8 C539.7 215.2 539.5 209.3 539.8 203.9 C540.1 198.5 540.5 192.2 541.5 188.6 C542.5 185.0 544.9 183.4 545.9 182.4 C546.9 181.4 546.6 181.4 547.6 182.4 C548.6 183.4 550.8 185.0 551.6 188.6 C552.4 192.2 552.5 198.5 552.5 203.9 C552.5 209.3 551.9 215.2 551.6 220.8 C551.3 226.4 550.8 233.2 550.8 237.7 C550.8 242.2 550.9 244.5 551.6 247.9 C552.3 251.3 553.7 254.6 555.0 258.0 C556.3 261.4 558.2 266.5 559.3 268.2 C560.4 269.9 560.8 269.9 561.8 268.2 C562.8 266.5 564.6 261.4 565.2 258.0 C565.8 254.6 564.9 251.3 565.2 247.9 C565.5 244.5 565.9 242.2 566.9 237.7 C567.9 233.2 569.7 226.4 571.1 220.8 C572.5 215.2 574.0 209.6 575.3 203.9 C576.6 198.2 578.0 191.6 578.7 186.9 C579.4 182.2 579.5 179.4 579.6 176.0 C579.7 172.6 579.5 170.3 579.2 166.6 C578.9 162.9 578.4 158.0 577.6 153.7 C576.8 149.4 575.6 144.4 574.4 140.8 C573.2 137.2 571.1 134.8 570.6 132.0 C570.1 129.2 570.8 127.4 571.1 124.3 C571.4 121.2 571.8 117.4 572.2 113.6 C572.6 109.8 572.9 106.0 573.3 101.7 C573.7 97.4 573.7 91.8 574.4 87.7 C575.1 83.6 576.5 80.0 577.6 76.9 C578.7 73.9 579.7 71.6 580.8 69.4 C581.9 67.2 596.9 64.9 584.0 64.0 C571.1 63.1 516.0 62.9 503.2 64.0Z" fill="none" stroke="#3c3c3c" stroke-width="5"/><path d="M521.6 134.0 C521.1 135.1 519.9 137.5 518.9 140.8 C517.9 144.1 516.4 149.4 515.6 153.7 C514.8 158.0 514.4 162.9 514.0 166.6 C513.6 170.3 513.4 172.6 513.5 176.0 C513.6 179.4 513.7 182.2 514.4 186.9 C515.1 191.6 516.5 198.2 517.8 203.9 C519.1 209.6 520.6 215.2 522.0 220.8 C523.4 226.4 525.5 234.9 526.2 237.7" fill="none" stroke="#383838" stroke-width="10"/><path d="M572.0 134.0 C572.4 135.1 573.5 137.5 574.4 140.8 C575.3 144.1 576.8 149.4 577.6 153.7 C578.4 158.0 578.9 162.9 579.2 166.6 C579.5 170.3 579.7 172.6 579.6 176.0 C579.5 179.4 579.4 182.2 578.7 186.9 C578.0 191.6 576.6 198.2 575.3 203.9 C574.0 209.6 572.5 215.2 571.1 220.8 C569.7 226.4 567.6 234.9 566.9 237.7" fill="none" stroke="#383838" stroke-width="10"/><path d="M523.6 138.0 C523.2 140.0 522.0 145.8 521.4 150.0 C520.8 154.2 520.1 158.7 520.0 163.0 C519.9 167.3 520.8 173.8 521.0 176.0" fill="none" stroke="#8d8d8d" stroke-width="2.6"/><path d="M570.0 138.0 C570.3 140.0 571.4 145.8 572.0 150.0 C572.6 154.2 573.3 158.7 573.4 163.0 C573.5 167.3 572.6 173.8 572.4 176.0" fill="none" stroke="#8d8d8d" stroke-width="2.6"/><path d="M503.0 64.0 C502.3 65.3 507.9 68.7 510.0 72.0 C512.1 75.3 514.2 79.3 515.6 84.0 C517.0 88.7 517.8 97.3 518.6 100.0 C519.4 102.7 520.1 102.3 520.6 100.0 C521.1 97.7 521.0 90.0 521.6 86.0 C522.2 82.0 524.3 79.0 524.0 76.0 C523.7 73.0 521.7 70.0 520.0 68.0 C518.3 66.0 516.8 64.7 514.0 64.0 C511.2 63.3 503.7 62.7 503.0 64.0Z" fill="#5a5a5a"/><path d="M590.6 64.0 C591.3 65.3 585.7 68.7 583.6 72.0 C581.5 75.3 579.4 79.3 578.0 84.0 C576.6 88.7 575.8 97.3 575.0 100.0 C574.2 102.7 573.5 102.3 573.0 100.0 C572.5 97.7 572.6 90.0 572.0 86.0 C571.4 82.0 569.3 79.0 569.6 76.0 C569.9 73.0 571.9 70.0 573.6 68.0 C575.3 66.0 576.8 64.7 579.6 64.0 C582.4 63.3 589.9 62.7 590.6 64.0Z" fill="#5a5a5a"/><path d="M515.0 67.0 C515.7 66.1 519.6 66.2 521.0 66.6 C522.4 67.0 523.6 68.4 523.6 69.6 C523.6 70.8 522.2 73.2 521.0 73.6 C519.8 74.0 517.6 73.1 516.6 72.0 C515.6 70.9 514.3 67.9 515.0 67.0Z" fill="#c9c9c9"/><path d="M578.6 67.0 C577.9 66.1 574.0 66.2 572.6 66.6 C571.2 67.0 570.0 68.4 570.0 69.6 C570.0 70.8 571.4 73.2 572.6 73.6 C573.8 74.0 576.0 73.1 577.0 72.0 C578.0 70.9 579.3 67.9 578.6 67.0Z" fill="#b9b9b9"/><rect x="541.6" y="66" width="9.6" height="8.6" fill="#cfcfcf"/><path d="M535.6 72.1 C538.1 71.8 541.3 73.3 543.1 74.8 C544.9 76.3 546.1 79.2 546.3 81.2 C546.5 83.2 545.1 84.2 544.2 86.6 C543.3 88.9 542.0 93.0 540.9 95.3 C539.8 97.6 539.5 99.3 537.7 100.6 C535.9 101.8 532.6 101.6 530.2 102.8 C527.8 104.0 524.7 108.7 523.4 107.6 C522.1 106.5 522.5 100.0 522.6 96.3 C522.7 92.6 523.3 88.8 524.2 85.6 C525.1 82.4 526.1 79.2 528.0 76.9 C529.9 74.7 533.1 72.4 535.6 72.1Z" fill="#040404"/><path d="M550.6 73.7 C551.7 72.4 553.8 72.1 556.0 72.6 C558.2 73.1 561.7 74.7 563.6 76.9 C565.5 79.1 566.4 82.4 567.3 85.6 C568.2 88.8 568.6 92.8 569.0 96.3 C569.4 99.8 570.4 105.1 569.7 106.4 C569.0 107.7 566.6 104.8 564.7 103.9 C562.8 103.0 560.7 101.0 558.2 101.2 C555.7 101.4 551.4 104.8 549.6 104.9 C547.8 105.0 546.7 103.1 547.4 101.7 C548.1 100.3 552.5 98.3 553.9 96.3 C555.3 94.3 556.0 91.7 556.0 89.9 C556.0 88.1 555.0 87.2 553.9 85.6 C552.8 84.0 550.1 82.2 549.6 80.2 C549.1 78.2 549.5 75.0 550.6 73.7Z" fill="#040404"/><path d="M543.0 90.0 C542.2 89.3 539.7 87.3 538.0 86.0 C536.3 84.7 533.8 82.7 533.0 82.0" fill="none" stroke="#6a6a6a" stroke-width="1.2"/><path d="M540.0 92.0 C539.2 91.7 536.7 90.3 535.0 90.0 C533.3 89.7 530.8 90.0 530.0 90.0" fill="none" stroke="#5a5a5a" stroke-width="1"/><path d="M554.0 86.0 C554.8 85.5 557.5 84.0 559.0 83.0 C560.5 82.0 562.3 80.5 563.0 80.0" fill="none" stroke="#6a6a6a" stroke-width="1.2"/><path d="M555.0 92.0 C555.8 92.2 558.3 92.3 560.0 93.0 C561.7 93.7 564.2 95.5 565.0 96.0" fill="none" stroke="#5a5a5a" stroke-width="1"/><path d="M527.0 75.6 C526.6 76.7 525.1 79.3 524.4 82.0 C523.7 84.7 523.0 88.7 522.6 92.0 C522.2 95.3 521.8 98.7 521.8 102.0 C521.8 105.3 522.3 110.3 522.4 112.0" fill="none" stroke="#e0e0e0" stroke-width="1.4" stroke-dasharray="1.6 1.5"/><path d="M564.6 76.0 C565.1 77.3 566.8 81.0 567.6 84.0 C568.4 87.0 568.9 90.7 569.4 94.0 C569.9 97.3 570.4 100.3 570.6 104.0 C570.8 107.7 571.1 112.3 570.8 116.0 C570.5 119.7 569.3 124.3 569.0 126.0" fill="none" stroke="#e0e0e0" stroke-width="1.4" stroke-dasharray="1.6 1.5"/><path d="M547.4 80.2 C547.9 79.7 549.5 84.2 550.6 85.6 C551.7 87.0 553.4 87.2 553.9 88.8 C554.4 90.4 554.4 93.5 553.9 95.3 C553.4 97.1 551.9 99.2 550.6 99.6 C549.3 99.9 547.7 98.2 546.3 97.4 C544.9 96.6 542.5 95.8 542.0 94.7 C541.5 93.6 542.2 91.9 543.1 90.9 C544.0 89.9 546.7 90.6 547.4 88.8 C548.1 87.0 546.9 80.7 547.4 80.2Z" fill="#ececec"/><path d="M541.6 89.0 C540.8 89.7 538.5 91.7 537.0 93.0 C535.5 94.3 533.3 96.0 532.6 96.6" fill="none" stroke="#cfcfcf" stroke-width="1.5"/><path d="M546.4 82.0 C546.8 82.8 547.7 86.1 549.0 87.0 C550.3 87.9 552.7 87.1 554.0 87.4 C555.3 87.7 556.2 88.7 556.6 89.0" fill="none" stroke="#d8d8d8" stroke-width="1.6"/><path d="M541.0 97.0 C542.0 96.2 544.8 96.8 546.0 98.0 C547.2 99.2 548.3 102.7 548.0 104.0 C547.7 105.3 545.3 106.2 544.0 106.0 C542.7 105.8 540.5 104.5 540.0 103.0 C539.5 101.5 540.0 97.8 541.0 97.0Z" fill="#8c8c8c"/><path d="M523.4 108.0 C524.6 105.6 528.2 104.4 531.0 103.6 C533.8 102.8 537.2 102.6 540.0 103.0 C542.8 103.4 545.3 105.8 548.0 106.0 C550.7 106.2 553.8 103.8 556.0 104.0 C558.2 104.2 561.0 105.5 561.0 107.0 C561.0 108.5 558.2 111.2 556.0 113.0 C553.8 114.8 550.5 115.8 548.0 118.0 C545.5 120.2 543.0 123.8 541.0 126.0 C539.0 128.2 538.2 130.7 536.0 131.0 C533.8 131.3 530.0 130.2 528.0 128.0 C526.0 125.8 524.8 121.3 524.0 118.0 C523.2 114.7 522.2 110.4 523.4 108.0Z" fill="#929292"/><path d="M529.6 113.0 C530.2 113.3 531.8 114.4 533.0 115.0 C534.2 115.6 536.3 116.2 537.0 116.4" fill="none" stroke="#b5b5b5" stroke-width="0.9"/><path d="M566.6 108.0 C567.3 107.7 569.3 108.8 570.0 110.0 C570.7 111.2 570.9 114.0 570.6 115.0 C570.3 116.0 568.8 116.5 568.0 116.0 C567.2 115.5 565.8 113.3 565.6 112.0 C565.4 110.7 565.9 108.3 566.6 108.0Z" fill="#a0a0a0"/><circle cx="555.8" cy="131.8" r="1.3" fill="#9c9c9c"/><circle cx="559.6" cy="133.2" r="1.6" fill="#3a3a3a"/><circle cx="556.1" cy="119.4" r="2.1" fill="#3a3a3a"/><circle cx="560.7" cy="132.0" r="1.3" fill="#2a2a2a"/><circle cx="555.7" cy="116.1" r="2.0" fill="#3a3a3a"/><circle cx="563.9" cy="136.9" r="0.9" fill="#9c9c9c"/><circle cx="552.7" cy="141.2" r="1.9" fill="#111"/><circle cx="559.6" cy="138.8" r="1.9" fill="#b0b0b0"/><circle cx="564.6" cy="127.1" r="1.7" fill="#9c9c9c"/><circle cx="559.1" cy="147.4" r="1.9" fill="#1c1c1c"/><circle cx="552.6" cy="129.8" r="1.1" fill="#b0b0b0"/><circle cx="559.0" cy="135.1" r="1.2" fill="#9c9c9c"/><circle cx="565.3" cy="133.0" r="1.5" fill="#3a3a3a"/><circle cx="561.3" cy="146.2" r="1.7" fill="#1c1c1c"/><circle cx="565.7" cy="149.6" r="1.7" fill="#2a2a2a"/><circle cx="563.2" cy="123.1" r="1.5" fill="#9c9c9c"/><circle cx="561.1" cy="138.6" r="1.1" fill="#9c9c9c"/><circle cx="556.3" cy="115.0" r="1.4" fill="#b0b0b0"/><circle cx="567.8" cy="113.5" r="1.8" fill="#3a3a3a"/><circle cx="566.4" cy="110.8" r="1.4" fill="#3a3a3a"/><circle cx="566.0" cy="111.8" r="1.6" fill="#1c1c1c"/><circle cx="558.0" cy="133.5" r="1.5" fill="#111"/><circle cx="560.1" cy="149.9" r="1.2" fill="#1c1c1c"/><circle cx="553.7" cy="131.4" r="2.0" fill="#3a3a3a"/><circle cx="556.7" cy="120.5" r="1.7" fill="#111"/><circle cx="557.0" cy="148.3" r="2.0" fill="#3a3a3a"/><circle cx="529.1" cy="151.9" r="1.3" fill="#8c8c8c"/><circle cx="532.5" cy="133.5" r="2.1" fill="#8c8c8c"/><circle cx="528.0" cy="146.2" r="1.7" fill="#0c0c0c"/><circle cx="529.8" cy="137.2" r="1.2" fill="#0c0c0c"/><circle cx="525.1" cy="141.0" r="1.6" fill="#161616"/><circle cx="529.1" cy="145.1" r="1.0" fill="#0c0c0c"/><circle cx="530.1" cy="147.3" r="1.3" fill="#0c0c0c"/><circle cx="533.1" cy="131.5" r="0.9" fill="#161616"/><circle cx="535.6" cy="137.0" r="1.4" fill="#8c8c8c"/><circle cx="531.6" cy="135.3" r="1.0" fill="#0c0c0c"/><circle cx="534.3" cy="137.3" r="1.8" fill="#161616"/><circle cx="533.5" cy="131.6" r="1.5" fill="#222"/><circle cx="528.4" cy="136.3" r="1.8" fill="#222"/><circle cx="528.6" cy="147.3" r="1.6" fill="#161616"/><circle cx="526.1" cy="138.7" r="1.2" fill="#222"/><circle cx="529.8" cy="151.5" r="1.0" fill="#0c0c0c"/><circle cx="533.2" cy="136.2" r="1.5" fill="#0c0c0c"/><circle cx="527.5" cy="133.9" r="1.5" fill="#222"/><circle cx="528.5" cy="151.1" r="1.5" fill="#0c0c0c"/><circle cx="528.7" cy="150.9" r="0.9" fill="#8c8c8c"/><circle cx="528.8" cy="134.1" r="1.2" fill="#0c0c0c"/><circle cx="530.1" cy="146.2" r="1.2" fill="#8c8c8c"/><path d="M526.4 133.0 C527.4 131.9 529.5 131.4 531.0 131.6 C532.5 131.8 534.7 132.4 535.6 134.0 C536.5 135.6 536.7 138.5 536.4 141.0 C536.1 143.5 535.1 146.9 534.0 149.0 C532.9 151.1 531.3 153.1 530.0 153.6 C528.7 154.1 526.9 153.4 526.0 152.0 C525.1 150.6 524.8 147.3 524.6 145.0 C524.4 142.7 524.7 140.0 525.0 138.0 C525.3 136.0 525.4 134.1 526.4 133.0Z" fill="#1a1a1a" opacity="0.85"/><path d="M558.6 140.0 C559.5 138.5 561.6 137.0 563.0 137.0 C564.4 137.0 566.3 138.2 567.0 140.0 C567.7 141.8 567.9 145.7 567.4 148.0 C566.9 150.3 565.3 152.9 564.0 153.6 C562.7 154.3 560.7 153.3 559.6 152.0 C558.5 150.7 557.8 148.0 557.6 146.0 C557.4 144.0 557.7 141.5 558.6 140.0Z" fill="#222" opacity="0.8"/><path d="M553.0 112.0 C554.0 110.5 556.3 109.8 558.0 110.0 C559.7 110.2 561.8 111.3 563.0 113.0 C564.2 114.7 565.2 117.7 565.0 120.0 C564.8 122.3 563.3 125.2 562.0 127.0 C560.7 128.8 558.4 131.0 557.0 131.0 C555.6 131.0 554.4 129.0 553.6 127.0 C552.8 125.0 552.1 121.5 552.0 119.0 C551.9 116.5 552.0 113.5 553.0 112.0Z" fill="#2a2a2a" opacity="0.7"/><path d="M553.0 121.0 C553.7 120.0 555.4 119.2 556.0 120.0 C556.6 120.8 556.9 124.5 556.6 126.0 C556.3 127.5 554.8 129.0 554.0 129.0 C553.2 129.0 552.2 127.3 552.0 126.0 C551.8 124.7 552.3 122.0 553.0 121.0Z" fill="#101010"/><path d="M540.6 116 L542.4 116 L543 137 L540 137 Z" fill="#b9b9b9"/><path d="M546 112 L548 112 L548.6 134 L546 134 Z" fill="#d9d9d9"/><rect x="544.2" y="136.4" width="5.6" height="6" fill="#e2e2e2"/><path d="M543.4 143 L550.4 143 L548.6 150 L545 150 Z" fill="#a9a9a9"/><path d="M542.0 138.0 C541.5 140.0 540.2 146.0 539.0 150.0 C537.8 154.0 535.7 160.0 535.0 162.0" fill="none" stroke="#8a8a8a" stroke-width="3"/><path d="M552.0 138.0 C552.5 140.0 553.9 146.0 555.0 150.0 C556.1 154.0 558.0 160.0 558.6 162.0" fill="none" stroke="#8a8a8a" stroke-width="3"/><circle cx="545.0" cy="156.0" r="1.5" fill="#151515"/><circle cx="547.6" cy="158.6" r="1.6" fill="#151515"/><circle cx="549.6" cy="161.0" r="1.5" fill="#151515"/><circle cx="551.4" cy="163.6" r="1.3" fill="#151515"/><circle cx="546.0" cy="160.6" r="1.1" fill="#151515"/><path d="M537.6 164.0 C538.6 162.9 540.8 162.5 543.0 162.6 C545.2 162.7 548.8 163.9 551.0 164.6 C553.2 165.3 555.5 165.6 556.0 167.0 C556.5 168.4 555.5 171.4 554.0 173.0 C552.5 174.6 549.3 176.4 547.0 176.6 C544.7 176.8 541.7 175.3 540.0 174.0 C538.3 172.7 537.4 170.7 537.0 169.0 C536.6 167.3 536.6 165.1 537.6 164.0Z" fill="#6c6c6c"/><path d="M522.1 150.6 L524.4 150 L536.4 168.6 L534.4 170.6 Z" fill="#f2f2f2"/><path d="M571.5 150.6 L569.2 150 L557.2 168.6 L559.2 170.6 Z" fill="#f2f2f2"/><circle cx="530.8" cy="171" r="3.7" fill="#dadada"/><circle cx="563.5" cy="170.6" r="3.7" fill="#dadada"/><circle cx="530.8" cy="171" r="2.2" fill="#c2c2c2"/><circle cx="563.5" cy="170.6" r="2.2" fill="#c2c2c2"/><path d="M536.0 171.6 C536.8 172.3 538.8 174.6 540.6 175.6 C542.4 176.6 544.8 177.6 546.9 177.6 C549.0 177.6 551.5 176.6 553.4 175.6 C555.2 174.6 557.2 172.3 558.0 171.6" fill="none" stroke="#dedede" stroke-width="1.1"/><path d="M546 178 L547.8 178 L547.6 184 L546.2 184 Z" fill="#9a9a9a"/><path d="M545.4 183.0 C544.8 184.2 542.5 186.5 541.6 190.0 C540.7 193.5 540.4 198.8 540.2 204.0 C540.0 209.2 540.1 215.7 540.2 221.0 C540.3 226.3 540.7 233.5 540.8 236.0" fill="none" stroke="#2c2c2c" stroke-width="4.6"/><path d="M548.0 183.0 C548.6 184.2 550.9 186.5 551.6 190.0 C552.3 193.5 552.2 198.8 552.2 204.0 C552.2 209.2 551.7 215.7 551.4 221.0 C551.1 226.3 550.7 233.5 550.6 236.0" fill="none" stroke="#2c2c2c" stroke-width="4.6"/><path d="M526.4 184.0 C526.5 186.0 526.7 191.3 527.2 196.0 C527.7 200.7 528.5 206.7 529.2 212.0 C529.9 217.3 530.8 223.2 531.6 228.0 C532.4 232.8 533.4 238.8 533.8 241.0" fill="none" stroke="#f4f4f4" stroke-width="3.6"/><path d="M566.8 184.0 C566.7 186.0 566.5 191.3 566.0 196.0 C565.5 200.7 564.8 206.7 564.0 212.0 C563.2 217.3 562.3 223.2 561.4 228.0 C560.5 232.8 559.1 238.8 558.6 241.0" fill="none" stroke="#f4f4f4" stroke-width="3.6"/><path d="M529.8 175 L526.4 184" stroke="#cfcfcf" stroke-width="2.6"/><path d="M564.4 175 L566.8 184" stroke="#cfcfcf" stroke-width="2.6"/><path d="M527.4 198.0 C527.7 200.3 528.7 207.0 529.4 212.0 C530.1 217.0 531.1 223.7 531.8 228.0 C532.5 232.3 533.1 236.3 533.4 238.0" fill="none" stroke="#7e7e7e" stroke-width="1"/><path d="M565.8 198.0 C565.5 200.3 564.6 207.0 563.8 212.0 C563.0 217.0 562.0 223.7 561.2 228.0 C560.4 232.3 559.4 236.3 559.0 238.0" fill="none" stroke="#7e7e7e" stroke-width="1"/><path d="M533.0 178.0 C533.3 180.0 534.2 185.7 535.0 190.0 C535.8 194.3 537.2 201.7 537.6 204.0" fill="none" stroke="#a8a8a8" stroke-width="0.8"/><path d="M561.0 178.0 C560.7 180.0 559.8 185.7 559.0 190.0 C558.2 194.3 556.8 201.7 556.4 204.0" fill="none" stroke="#a8a8a8" stroke-width="0.8"/><ellipse cx="533" cy="246.2" rx="4.4" ry="3.3" fill="#ededed"/><ellipse cx="559.4" cy="246.2" rx="4.2" ry="3.3" fill="#ededed"/><path d="M528.6 250.4 H537.6 L532 267 Z" fill="#4a4a4a"/><path d="M555 250.4 H564 L560.4 267 Z" fill="#4a4a4a"/><path d="M530 253 L534.6 253 L533 264.4 L531.4 264.4 Z" fill="#f3f3f3"/><path d="M557 253 L562.4 253 L560.8 264.4 L559.2 264.4 Z" fill="#f3f3f3"/></g><path d="M503.2 64.0 C490.4 65.1 505.6 68.3 507.0 70.5 C508.4 72.7 510.4 74.0 511.9 76.9 C513.4 79.8 515.0 83.6 516.2 87.7 C517.4 91.8 518.2 97.4 518.9 101.7 C519.6 106.0 520.0 109.8 520.5 113.6 C521.0 117.4 521.6 121.2 522.1 124.3 C522.6 127.4 523.7 129.2 523.2 132.0 C522.7 134.8 520.2 137.2 518.9 140.8 C517.6 144.4 516.4 149.4 515.6 153.7 C514.8 158.0 514.4 162.9 514.0 166.6 C513.6 170.3 513.4 172.6 513.5 176.0 C513.6 179.4 513.7 182.2 514.4 186.9 C515.1 191.6 516.5 198.2 517.8 203.9 C519.1 209.6 520.6 215.2 522.0 220.8 C523.4 226.4 525.2 233.2 526.2 237.7 C527.2 242.2 527.6 244.5 527.9 247.9 C528.2 251.3 527.5 254.6 527.9 258.0 C528.3 261.4 529.8 266.5 530.5 268.2 C531.2 269.9 531.2 269.9 532.2 268.2 C533.2 266.5 535.1 261.4 536.4 258.0 C537.7 254.6 539.1 251.3 539.8 247.9 C540.5 244.5 540.6 242.2 540.6 237.7 C540.6 233.2 539.9 226.4 539.8 220.8 C539.7 215.2 539.5 209.3 539.8 203.9 C540.1 198.5 540.5 192.2 541.5 188.6 C542.5 185.0 544.9 183.4 545.9 182.4 C546.9 181.4 546.6 181.4 547.6 182.4 C548.6 183.4 550.8 185.0 551.6 188.6 C552.4 192.2 552.5 198.5 552.5 203.9 C552.5 209.3 551.9 215.2 551.6 220.8 C551.3 226.4 550.8 233.2 550.8 237.7 C550.8 242.2 550.9 244.5 551.6 247.9 C552.3 251.3 553.7 254.6 555.0 258.0 C556.3 261.4 558.2 266.5 559.3 268.2 C560.4 269.9 560.8 269.9 561.8 268.2 C562.8 266.5 564.6 261.4 565.2 258.0 C565.8 254.6 564.9 251.3 565.2 247.9 C565.5 244.5 565.9 242.2 566.9 237.7 C567.9 233.2 569.7 226.4 571.1 220.8 C572.5 215.2 574.0 209.6 575.3 203.9 C576.6 198.2 578.0 191.6 578.7 186.9 C579.4 182.2 579.5 179.4 579.6 176.0 C579.7 172.6 579.5 170.3 579.2 166.6 C578.9 162.9 578.4 158.0 577.6 153.7 C576.8 149.4 575.6 144.4 574.4 140.8 C573.2 137.2 571.1 134.8 570.6 132.0 C570.1 129.2 570.8 127.4 571.1 124.3 C571.4 121.2 571.8 117.4 572.2 113.6 C572.6 109.8 572.9 106.0 573.3 101.7 C573.7 97.4 573.7 91.8 574.4 87.7 C575.1 83.6 576.5 80.0 577.6 76.9 C578.7 73.9 579.7 71.6 580.8 69.4 C581.9 67.2 596.9 64.9 584.0 64.0 C571.1 63.1 516.0 62.9 503.2 64.0Z" fill="none" stroke="#555" stroke-width="0.7"/></g><g><rect x="500" y="67" width="90" height="204" clip-path="url(#s2clip)" filter="url(#s2n)" opacity="0.28" style="mix-blend-mode:overlay"/></g><g filter="url(#s2b)"><path d="M533.6 321.0 C534.6 320.2 536.4 319.6 537.6 320.0 C538.8 320.4 540.3 321.8 541.0 323.6 C541.7 325.4 542.0 328.8 541.8 331.0 C541.6 333.2 540.7 335.7 539.6 337.0 C538.5 338.3 536.4 338.9 535.0 338.8 C533.6 338.7 531.8 338.1 531.0 336.6 C530.2 335.1 530.3 332.0 530.4 330.0 C530.5 328.0 531.1 326.1 531.6 324.6 C532.1 323.1 532.6 321.8 533.6 321.0Z" fill="#b4b4b4"/><path d="M555.6 321.0 C554.6 320.2 552.8 319.6 551.6 320.0 C550.4 320.4 548.9 321.8 548.2 323.6 C547.5 325.4 547.2 328.8 547.4 331.0 C547.6 333.2 548.5 335.7 549.6 337.0 C550.7 338.3 552.8 338.9 554.2 338.8 C555.6 338.7 557.4 338.1 558.2 336.6 C559.0 335.1 558.9 332.0 558.8 330.0 C558.7 328.0 558.1 326.1 557.6 324.6 C557.1 323.1 556.6 321.8 555.6 321.0Z" fill="#b4b4b4"/><circle cx="536.9" cy="332.6" r="1.5" fill="#d8d8d8"/><circle cx="538.5" cy="333.1" r="1.0" fill="#d8d8d8"/><circle cx="538.9" cy="324.5" r="1.2" fill="#e6e6e6"/><circle cx="535.1" cy="324.3" r="1.0" fill="#e6e6e6"/><circle cx="535.3" cy="325.4" r="1.6" fill="#c4c4c4"/><circle cx="533.5" cy="333.4" r="0.9" fill="#c4c4c4"/><circle cx="533.3" cy="323.0" r="1.6" fill="#e6e6e6"/><circle cx="538.0" cy="335.5" r="0.9" fill="#e6e6e6"/><circle cx="534.5" cy="335.5" r="1.3" fill="#e6e6e6"/><circle cx="550.9" cy="335.6" r="1.0" fill="#c4c4c4"/><circle cx="551.8" cy="327.7" r="0.9" fill="#e6e6e6"/><circle cx="551.5" cy="327.3" r="1.5" fill="#d8d8d8"/><circle cx="553.9" cy="332.2" r="0.9" fill="#777"/><circle cx="555.5" cy="329.2" r="1.1" fill="#c4c4c4"/><circle cx="553.0" cy="325.3" r="1.0" fill="#d8d8d8"/><circle cx="556.4" cy="327.6" r="1.2" fill="#c4c4c4"/><circle cx="552.2" cy="330.5" r="0.8" fill="#d8d8d8"/><circle cx="554.7" cy="331.1" r="1.7" fill="#d8d8d8"/></g></svg><!--/SVG2-->
    <div class="dl" style="left:30px"></div><div class="dl" style="left:322px"></div>
    <div class="dh" style="top:1px"></div><div class="dh" style="top:274px"></div>
    <div class="t" style="left:0.3px;top:2.2px">Slice : 256 / 512</div>
    <div class="t" style="left:0.3px;top:14.2px">WL: -179 WW:420</div>
    <div class="t" style="left:0.3px;top:27.2px">CORONAL</div>
    <div class="t" style="left:309.3px;top:-1.7px;background:#000">BodyYes</div>
    <div class="t" style="left:309.6px;top:15.3px">ID: 001/10</div>
    <div class="t" style="left:298.6px;top:262px">Quality: High</div>
  </div>
  <!-- TRANSVERSE -->
  <div class="vp" id="vp3" style="left:13px;top:345px;width:356px;height:279px">
    <!--SVG3--><svg width="352" height="276" viewBox="15 347 352 276"><defs><filter id="s3b" x="-0.1" y="-0.1" width="1.2" height="1.2"><feGaussianBlur stdDeviation="0.6"/></filter><filter id="s3n" x="0" y="0" width="1" height="1" color-interpolation-filters="sRGB"><feTurbulence type="fractalNoise" baseFrequency="0.5" numOctaves="2" seed="2"/><feColorMatrix values="0.6 0.6 0.6 0 -0.4 0.6 0.6 0.6 0 -0.4 0.6 0.6 0.6 0 -0.4 0 0 0 0 1"/></filter></defs><g filter="url(#s3b)"><path d="M189.2 497.1 C189.1 500.4 188.5 503.7 187.5 506.9 C186.6 510.0 185.1 513.1 183.4 515.9 C181.7 518.7 179.5 521.4 177.2 523.8 C174.8 526.1 172.2 528.3 169.3 530.1 C166.5 532.0 163.5 533.6 160.3 534.9 C157.2 536.1 153.9 537.2 150.5 537.9 C147.1 538.6 143.7 539.0 140.2 539.1 C136.7 539.2 133.2 538.9 129.8 538.4 C126.3 537.8 122.9 536.9 119.6 535.7 C116.4 534.5 113.1 532.9 110.2 531.1 C107.3 529.2 104.5 527.0 102.2 524.5 C99.8 522.0 97.7 519.2 96.0 516.3 C94.4 513.4 93.1 510.2 92.3 507.0 C91.5 503.8 91.1 500.4 91.2 497.1 C91.3 493.8 91.9 490.5 92.9 487.3 C93.8 484.2 95.3 481.1 97.0 478.3 C98.7 475.5 100.9 472.8 103.2 470.4 C105.6 468.1 108.2 465.9 111.1 464.1 C113.9 462.2 116.9 460.6 120.1 459.3 C123.2 458.1 126.5 457.0 129.9 456.3 C133.3 455.6 136.7 455.2 140.2 455.1 C143.7 455.0 147.2 455.3 150.6 455.8 C154.1 456.4 157.5 457.3 160.8 458.5 C164.0 459.7 167.3 461.3 170.2 463.1 C173.1 465.0 175.9 467.2 178.2 469.7 C180.6 472.2 182.7 475.0 184.4 477.9 C186.0 480.8 187.3 484.0 188.1 487.2 C188.9 490.4 189.3 493.8 189.2 497.1Z" fill="#323232"/><path d="M189.2 497.1 C189.1 500.4 188.5 503.7 187.5 506.9 C186.6 510.0 185.1 513.1 183.4 515.9 C181.7 518.7 179.5 521.4 177.2 523.8 C174.8 526.1 172.2 528.3 169.3 530.1 C166.5 532.0 163.5 533.6 160.3 534.9 C157.2 536.1 153.9 537.2 150.5 537.9 C147.1 538.6 143.7 539.0 140.2 539.1 C136.7 539.2 133.2 538.9 129.8 538.4 C126.3 537.8 122.9 536.9 119.6 535.7 C116.4 534.5 113.1 532.9 110.2 531.1 C107.3 529.2 104.5 527.0 102.2 524.5 C99.8 522.0 97.7 519.2 96.0 516.3 C94.4 513.4 93.1 510.2 92.3 507.0 C91.5 503.8 91.1 500.4 91.2 497.1 C91.3 493.8 91.9 490.5 92.9 487.3 C93.8 484.2 95.3 481.1 97.0 478.3 C98.7 475.5 100.9 472.8 103.2 470.4 C105.6 468.1 108.2 465.9 111.1 464.1 C113.9 462.2 116.9 460.6 120.1 459.3 C123.2 458.1 126.5 457.0 129.9 456.3 C133.3 455.6 136.7 455.2 140.2 455.1 C143.7 455.0 147.2 455.3 150.6 455.8 C154.1 456.4 157.5 457.3 160.8 458.5 C164.0 459.7 167.3 461.3 170.2 463.1 C173.1 465.0 175.9 467.2 178.2 469.7 C180.6 472.2 182.7 475.0 184.4 477.9 C186.0 480.8 187.3 484.0 188.1 487.2 C188.9 490.4 189.3 493.8 189.2 497.1Z" fill="none" stroke="#505050" stroke-width="0.8"/><path d="M291.0 497.2 C290.9 500.5 290.3 503.9 289.3 507.1 C288.3 510.2 286.9 513.4 285.1 516.2 C283.3 519.1 281.2 521.8 278.8 524.2 C276.4 526.6 273.6 528.7 270.8 530.6 C267.9 532.5 264.8 534.1 261.5 535.4 C258.3 536.7 254.9 537.7 251.5 538.4 C248.1 539.1 244.5 539.6 241.0 539.7 C237.5 539.7 233.9 539.5 230.4 539.0 C226.8 538.4 223.3 537.5 220.0 536.3 C216.7 535.0 213.4 533.5 210.4 531.6 C207.4 529.7 204.6 527.4 202.2 524.9 C199.8 522.4 197.6 519.6 195.9 516.6 C194.2 513.7 192.9 510.4 192.1 507.2 C191.3 504.0 190.9 500.5 191.0 497.2 C191.1 493.9 191.7 490.5 192.7 487.3 C193.7 484.2 195.1 481.0 196.9 478.2 C198.7 475.3 200.8 472.6 203.2 470.2 C205.6 467.8 208.4 465.7 211.2 463.8 C214.1 461.9 217.2 460.3 220.5 459.0 C223.7 457.7 227.1 456.7 230.5 456.0 C233.9 455.3 237.5 454.8 241.0 454.7 C244.5 454.7 248.1 454.9 251.6 455.4 C255.2 456.0 258.7 456.9 262.0 458.1 C265.3 459.4 268.6 460.9 271.6 462.8 C274.6 464.7 277.4 467.0 279.8 469.5 C282.2 472.0 284.4 474.8 286.1 477.8 C287.8 480.7 289.1 484.0 289.9 487.2 C290.7 490.4 291.1 493.9 291.0 497.2Z" fill="#323232"/><path d="M291.0 497.2 C290.9 500.5 290.3 503.9 289.3 507.1 C288.3 510.2 286.9 513.4 285.1 516.2 C283.3 519.1 281.2 521.8 278.8 524.2 C276.4 526.6 273.6 528.7 270.8 530.6 C267.9 532.5 264.8 534.1 261.5 535.4 C258.3 536.7 254.9 537.7 251.5 538.4 C248.1 539.1 244.5 539.6 241.0 539.7 C237.5 539.7 233.9 539.5 230.4 539.0 C226.8 538.4 223.3 537.5 220.0 536.3 C216.7 535.0 213.4 533.5 210.4 531.6 C207.4 529.7 204.6 527.4 202.2 524.9 C199.8 522.4 197.6 519.6 195.9 516.6 C194.2 513.7 192.9 510.4 192.1 507.2 C191.3 504.0 190.9 500.5 191.0 497.2 C191.1 493.9 191.7 490.5 192.7 487.3 C193.7 484.2 195.1 481.0 196.9 478.2 C198.7 475.3 200.8 472.6 203.2 470.2 C205.6 467.8 208.4 465.7 211.2 463.8 C214.1 461.9 217.2 460.3 220.5 459.0 C223.7 457.7 227.1 456.7 230.5 456.0 C233.9 455.3 237.5 454.8 241.0 454.7 C244.5 454.7 248.1 454.9 251.6 455.4 C255.2 456.0 258.7 456.9 262.0 458.1 C265.3 459.4 268.6 460.9 271.6 462.8 C274.6 464.7 277.4 467.0 279.8 469.5 C282.2 472.0 284.4 474.8 286.1 477.8 C287.8 480.7 289.1 484.0 289.9 487.2 C290.7 490.4 291.1 493.9 291.0 497.2Z" fill="none" stroke="#505050" stroke-width="0.8"/><path d="M102.9 484.0 C103.1 480.2 103.3 475.4 105.2 472.5 C107.1 469.6 111.0 468.1 114.4 466.8 C117.8 465.5 122.8 464.5 125.8 464.5 C128.8 464.5 130.4 466.8 132.7 466.6 C135.0 466.4 136.5 463.1 139.6 463.3 C142.7 463.5 147.9 465.2 151.0 467.9 C154.1 470.6 155.6 476.3 157.9 479.4 C160.2 482.4 163.1 482.8 164.8 486.2 C166.5 489.6 167.2 495.4 168.2 500.0 C169.1 504.6 170.7 509.9 170.5 513.7 C170.3 517.5 169.2 520.2 167.1 522.9 C165.0 525.6 161.0 528.3 157.9 529.8 C154.8 531.3 152.1 531.9 148.7 532.1 C145.3 532.3 141.1 531.9 137.3 530.9 C133.5 529.9 128.5 528.8 125.8 526.3 C123.1 523.8 122.7 518.5 121.2 516.0 C119.7 513.5 118.8 513.0 116.7 511.5 C114.6 510.0 110.7 509.6 108.6 506.9 C106.5 504.2 105.0 499.2 104.1 495.4 C103.1 491.6 102.7 487.8 102.9 484.0Z" fill="#818181"/><ellipse cx="173.5" cy="510.3" rx="2.9" ry="5.8" fill="#7c7c7c"/><path d="M217.5 490.8 C217.3 489.3 213.6 488.5 214.0 486.2 C214.4 483.9 217.7 479.9 219.8 477.0 C221.9 474.1 223.3 471.3 226.7 469.0 C230.1 466.7 236.6 463.9 240.4 463.3 C244.2 462.7 246.2 465.2 249.6 465.4 C253.0 465.6 257.2 463.7 261.0 464.5 C264.8 465.3 269.6 467.3 272.5 470.2 C275.4 473.1 277.4 477.1 278.2 481.7 C279.0 486.3 278.1 492.7 277.1 497.7 C276.2 502.7 274.6 508.7 272.5 511.5 C270.4 514.3 266.1 512.7 264.6 514.6 C263.1 516.5 264.7 520.2 263.3 522.9 C261.9 525.6 259.8 529.0 256.4 530.9 C253.0 532.8 247.6 534.0 242.7 534.4 C237.8 534.8 231.3 534.7 226.7 533.2 C222.1 531.7 217.9 528.5 215.2 525.2 C212.5 522.0 211.2 517.5 210.6 513.7 C210.0 509.9 211.0 505.4 211.8 502.3 C212.6 499.2 214.2 497.3 215.2 495.4 C216.1 493.5 217.7 492.3 217.5 490.8Z" fill="#818181"/><ellipse cx="208.3" cy="513.7" rx="3" ry="6" fill="#7c7c7c"/><path d="M132.7 466.0 C132.9 467.0 132.9 470.0 134.0 472.0 C135.1 474.0 138.2 477.0 139.0 478.0" fill="none" stroke="#585858" stroke-width="0.9"/><path d="M108.6 506.9 C110.2 507.1 115.1 508.3 118.0 508.0 C120.9 507.7 124.0 506.7 126.0 505.0 C128.0 503.3 129.3 499.2 130.0 498.0" fill="none" stroke="#585858" stroke-width="0.9"/><path d="M126.0 505.0 C126.3 506.8 128.0 512.5 128.0 516.0 C128.0 519.5 126.2 524.3 125.8 526.0" fill="none" stroke="#585858" stroke-width="0.9"/><path d="M128.0 516.0 C129.5 516.5 134.8 516.7 137.0 519.0 C139.2 521.3 140.3 528.2 141.0 530.0" fill="none" stroke="#585858" stroke-width="0.9"/><path d="M137.0 519.0 C138.5 518.5 143.8 518.2 146.0 516.0 C148.2 513.8 149.3 507.7 150.0 506.0" fill="none" stroke="#585858" stroke-width="0.9"/><path d="M150.0 506.0 C151.3 505.0 156.3 502.7 158.0 500.0 C159.7 497.3 159.7 491.7 160.0 490.0" fill="none" stroke="#585858" stroke-width="0.9"/><path d="M146.0 516.0 C147.2 517.0 151.2 519.8 153.0 522.0 C154.8 524.2 156.3 527.8 157.0 529.0" fill="none" stroke="#585858" stroke-width="0.9"/><path d="M144.0 480.0 C145.0 481.3 149.0 485.2 150.0 488.0 C151.0 490.8 150.0 495.5 150.0 497.0" fill="none" stroke="#585858" stroke-width="0.9"/><path d="M249.6 465.0 C249.3 466.2 248.9 469.8 248.0 472.0 C247.1 474.2 244.7 477.0 244.0 478.0" fill="none" stroke="#585858" stroke-width="0.9"/><path d="M272.5 511.0 C270.8 510.7 264.9 510.0 262.0 509.0 C259.1 508.0 256.7 506.8 255.0 505.0 C253.3 503.2 252.5 499.2 252.0 498.0" fill="none" stroke="#585858" stroke-width="0.9"/><path d="M255.0 505.0 C254.5 506.8 251.8 511.8 252.0 516.0 C252.2 520.2 255.3 527.7 256.0 530.0" fill="none" stroke="#585858" stroke-width="0.9"/><path d="M252.0 516.0 C250.5 516.5 245.3 516.2 243.0 519.0 C240.7 521.8 238.8 530.7 238.0 533.0" fill="none" stroke="#585858" stroke-width="0.9"/><path d="M243.0 519.0 C241.5 518.2 236.5 516.2 234.0 514.0 C231.5 511.8 229.0 507.3 228.0 506.0" fill="none" stroke="#585858" stroke-width="0.9"/><path d="M228.0 506.0 C226.7 505.0 221.8 502.5 220.0 500.0 C218.2 497.5 217.5 492.5 217.0 491.0" fill="none" stroke="#585858" stroke-width="0.9"/><path d="M234.0 514.0 C232.7 515.2 228.0 518.3 226.0 521.0 C224.0 523.7 222.7 528.5 222.0 530.0" fill="none" stroke="#585858" stroke-width="0.9"/><path d="M238.0 480.0 C237.0 481.3 233.2 485.2 232.0 488.0 C230.8 490.8 231.2 495.5 231.0 497.0" fill="none" stroke="#585858" stroke-width="0.9"/><ellipse cx="135.7" cy="487.4" rx="8" ry="8.4" fill="#ececec"/><ellipse cx="135.7" cy="487.1" rx="2.6" ry="3" fill="#1c1c1c"/><ellipse cx="246.6" cy="488.5" rx="8" ry="8.4" fill="#ececec"/><ellipse cx="246.6" cy="488.2" rx="2.6" ry="3" fill="#1c1c1c"/><circle cx="124.0" cy="478.0" r="1.1" fill="#e4e4e4"/><circle cx="127.0" cy="476.6" r="0.9" fill="#e4e4e4"/><circle cx="138.6" cy="476.0" r="0.9" fill="#e4e4e4"/><circle cx="141.0" cy="500.0" r="1.3" fill="#e4e4e4"/><circle cx="143.6" cy="501.6" r="1.0" fill="#e4e4e4"/><circle cx="153.0" cy="492.6" r="1.4" fill="#e4e4e4"/><circle cx="156.0" cy="489.0" r="1.0" fill="#e4e4e4"/><circle cx="131.0" cy="507.0" r="0.9" fill="#e4e4e4"/><circle cx="114.0" cy="501.0" r="0.8" fill="#e4e4e4"/><circle cx="161.0" cy="496.0" r="0.8" fill="#e4e4e4"/><circle cx="244.0" cy="470.4" r="1.2" fill="#e4e4e4"/><circle cx="255.0" cy="478.0" r="1.0" fill="#e4e4e4"/><circle cx="222.6" cy="494.0" r="1.3" fill="#e4e4e4"/><circle cx="225.6" cy="496.6" r="1.2" fill="#e4e4e4"/><circle cx="238.0" cy="502.0" r="1.4" fill="#e4e4e4"/><circle cx="232.0" cy="505.0" r="0.9" fill="#e4e4e4"/><circle cx="259.0" cy="497.0" r="0.9" fill="#e4e4e4"/><circle cx="268.0" cy="505.0" r="1.0" fill="#e4e4e4"/><circle cx="247.0" cy="515.0" r="0.8" fill="#e4e4e4"/><circle cx="220.0" cy="487.0" r="0.8" fill="#e4e4e4"/></g><rect x="90" y="452" width="202" height="92" filter="url(#s3n)" opacity="0.13" style="mix-blend-mode:overlay"/><g fill="none" stroke-linecap="round"><path d="M46.0 540.0 C51.3 541.9 66.8 547.8 78.0 551.4 C89.2 555.0 101.3 558.9 113.3 561.7 C125.3 564.5 137.2 566.5 150.0 568.0 C162.8 569.5 177.0 570.6 190.0 570.7 C203.0 570.8 215.8 569.6 228.0 568.4 C240.2 567.2 251.3 565.7 263.3 563.3 C275.3 560.9 287.8 557.6 300.0 554.0 C312.2 550.4 330.6 543.8 336.7 541.7" stroke="#cfcfcf" stroke-width="1.3"/><path d="M46 545 L101.7 595 M286.7 595 L336.7 548.3" stroke="#6e6e6e" stroke-width="1"/><path d="M101.7 595.0 C103.8 595.9 109.3 598.9 114.0 600.6 C118.7 602.3 122.3 603.5 130.0 605.0 C137.7 606.5 150.0 608.4 160.0 609.4 C170.0 610.4 180.0 610.9 190.0 611.0 C200.0 611.1 210.6 610.6 220.0 610.0 C229.4 609.4 239.0 608.4 246.7 607.3 C254.4 606.2 261.0 604.6 266.0 603.4 C271.0 602.2 273.2 601.4 276.7 600.0 C280.1 598.6 285.0 595.8 286.7 595.0" stroke="#d4d4d4" stroke-width="1.3"/><path d="M65.6 575 Q61.4 574.6 61.6 570 Q62.6 566.2 66.4 568.6 L100 598.3" stroke="#ececec" stroke-width="1.7"/><path d="M318.6 576 Q323 575.6 322.8 571 Q321.8 567 318 569.4 L283.3 600" stroke="#ececec" stroke-width="1.7"/></g></svg><!--/SVG3-->
    <div class="dl" style="left:30px"></div><div class="dl" style="left:322px"></div>
    <div class="dh" style="top:1px"></div><div class="dh" style="top:274px"></div>
    <div class="t" style="left:0.3px;top:2.2px">Slice : 500 / 1000</div>
    <div class="t" style="left:0.3px;top:14.2px">WL: -179 WW:420</div>
    <div class="t" style="left:0.3px;top:27.2px">TRANSVERSE</div>
    <div class="t" style="left:309.3px;top:-1.7px;background:#000">BodyYes</div>
    <div class="t" style="left:309.6px;top:15.3px">ID: 001/10</div>
    <div class="t" style="left:298.6px;top:262px">Quality: High</div>
  </div>

  <div class="abs" style="left:15px;top:346px;width:352px;height:1px;background:#000"></div>
  <div id="toolbar"></div>
  <div class="tb " style="top:72.0px"><svg width="36" height="33" viewBox="735 72.0 36 33"><path d="M749.2 78.3 V90.6 L752.2 87.9 L755.2 93.8 L757.4 92.8 L754.5 87 L758.4 86.6 Z" fill="#a9c6d4"/></svg><span>Default</span></div>
  <div class="tb flat" style="top:108.9px"><svg width="36" height="33" viewBox="735 108.9 36 33"><g fill="#a9c6d4"><path d="M752.5 112.6 L755.8 116.6 H749.2 Z"/><path d="M752.5 131.8 L755.8 127.6 H749.2 Z"/><path d="M741.8 122 L747.2 118.9 V125.1 Z"/><path d="M763.2 122 L757.8 118.9 V125.1 Z"/></g><rect x="749.3" y="118.8" width="6.4" height="6.4" fill="#2a3d4b"/></svg><span>Move</span></div>
  <div class="tb " style="top:145.8px"><svg width="36" height="33" viewBox="735 145.8 36 33"><path d="M742.8 167.4 L753 157 L762.6 148.6 Q764.4 147.6 764.6 149.4 L755.6 159.6 Z" fill="#a9c6d4"/></svg><span>Scalpel</span></div>
  <div class="tb " style="top:182.7px"><svg width="36" height="33" viewBox="735 182.7 36 33"><text x="753.1" y="204.9" font-family="Liberation Serif, serif" font-size="23.5" fill="#b6d2de" text-anchor="middle">T</text></svg><span style="letter-spacing:-0.25px">Annotation</span></div>
  <div class="tb " style="top:219.6px"><svg width="36" height="33" viewBox="735 219.6 36 33"><rect x="743.1" y="227.3" width="21" height="5.5" fill="#a9c6d4"/><rect x="745" y="229.4" width="1.5" height="1.5" fill="#16212b"/><rect x="743.2" y="237.2" width="20.8" height="0.9" fill="#7e97a6"/><rect x="743.2" y="235.4" width="1.1" height="3.8" fill="#d4e4ec"/><rect x="746.6" y="235.4" width="1.1" height="3.8" fill="#d4e4ec"/><rect x="750.0" y="235.4" width="1.1" height="3.8" fill="#d4e4ec"/><rect x="753.4" y="235.4" width="1.1" height="3.8" fill="#d4e4ec"/><rect x="756.8" y="235.4" width="1.1" height="3.8" fill="#d4e4ec"/><rect x="760.2" y="235.4" width="1.1" height="3.8" fill="#d4e4ec"/><rect x="763.6" y="235.4" width="1.1" height="3.8" fill="#d4e4ec"/></svg><span>Measure</span></div>
  <div class="tb " style="top:256.5px"><svg width="36" height="33" viewBox="735 256.5 36 33"><circle cx="746.5" cy="260.8" r="1.7" fill="#b4ccd8"/><path d="M743.5 263.4 L749.5 263.4 L752.3 271.0 L751.4 271.7 L749.1 266.4 L748.8 272.0 L749.2 279.9 L747.5 279.9 L746.8 273.6 L746.2 273.6 L745.5 279.9 L743.8 279.9 L744.2 272.0 L743.9 266.4 L741.6 271.7 L740.7 271.0Z" fill="#a6bfcb"/><path d="M746.5 264.6 V271.6" stroke="#4a5f6c" stroke-width="0.7"/><path d="M744.7 265.6 H748.3 M744.9 267.4 H748.1" stroke="#4a5f6c" stroke-width="0.5"/><circle cx="759.2" cy="260.8" r="1.5" fill="#2a3a46" stroke="#b4ccd8" stroke-width="0.7"/><path d="M756.2 263.4 L762.2 263.4 L765.0 271.0 L764.1 271.7 L761.8 266.4 L761.5 272.0 L761.9 279.9 L760.2 279.9 L759.5 273.6 L759.0 273.6 L758.2 279.9 L756.5 279.9 L756.9 272.0 L756.6 266.4 L754.3 271.7 L753.4 271.0Z" fill="#2a3a46" stroke="#b4ccd8" stroke-width="0.8" stroke-linejoin="round"/></svg><span style="bottom:1.9px">Preset</span></div>
  <div class="tb " style="top:293.4px"><svg width="36" height="33" viewBox="735 293.4 36 33"><path d="M743.1 302.2 Q743.1 301.2 744.1 301.2 H750 L751.4 298.6 H758.6 L760 301.2 H762.4 Q763.4 301.2 763.4 302.2 V312 Q763.4 313 762.4 313 H744.1 Q743.1 313 743.1 312 Z" fill="#a9c6d4"/><rect x="744.8" y="299.6" width="3.2" height="1.6" fill="#a9c6d4"/><circle cx="755.6" cy="306.8" r="4.6" fill="#1f2c38"/><circle cx="755.6" cy="306.8" r="2.9" fill="none" stroke="#a9c6d4" stroke-width="1.2"/></svg><span>Camera</span></div>
  <div class="tb none" style="top:330.3px"><svg width="36" height="33" viewBox="735 330.3 36 33"><g fill="none" stroke="#a9c6d4" stroke-width="1.3" stroke-linejoin="round"><path d="M739.6 344.6 L744.4 337.9 L748 340.2 L743.4 347.2 Z"/><path d="M766 344 L761.8 337.6 L757.8 339.8 L762 346.6 Z"/></g><path d="M746.8 341.2 L751 340.2 L757.6 340.6 L762.4 346.4 L757.2 352.6 L754 353.4 L745 347.6 Z" fill="#a9c6d4"/><path d="M749.6 344.6 L754.6 342.2 L759.6 347.4" fill="none" stroke="#1e2b38" stroke-width="1"/></svg><span style="letter-spacing:-0.42px;color:#8fa9b8">Collaboration</span></div>
  <div class="tb dis" style="top:367.2px"><svg width="36" height="33" viewBox="735 367.2 36 33"><polygon points="756.2,372.3 760.3,374.1 757.7,377.4 755.5,376.5" fill="#8ea9b7"/><polygon points="760.9,374.6 763.4,378.2 759.5,379.7 758.1,377.7" fill="#8ea9b7"/><polygon points="763.6,379.0 763.8,383.4 759.7,382.6 759.6,380.2" fill="#8ea9b7"/><polygon points="763.6,384.2 761.5,388.0 758.4,385.1 759.6,383.0" fill="#8ea9b7"/><polygon points="760.9,388.6 757.0,390.7 755.9,386.6 758.1,385.5" fill="#8ea9b7"/><polygon points="756.2,390.9 751.9,390.6 753.1,386.6 755.5,386.7" fill="#8ea9b7"/><polygon points="751.1,390.3 747.5,387.8 750.7,385.0 752.7,386.4" fill="#8ea9b7"/><path d="M741.6 381.8 L746.6 375.2 L751.6 381.8 H748.8 Q749 385 751 387.2 L747.6 390 Q744.6 386.6 744.4 381.8 Z" fill="#8ea9b7"/></svg><span>Reset</span></div>
  <div class="tb " style="top:404.1px"><svg width="36" height="33" viewBox="735 404.1 36 33"><defs><linearGradient id="gQ" x1="0" y1="0" x2="1" y2="1"><stop offset="0" stop-color="#d0d4d8"/><stop offset="1" stop-color="#858d94"/></linearGradient></defs><path d="M745.3 409.8 H761.7 V423.2 L757.4 427.2 H745.3 Z" fill="#24323e" stroke="url(#gQ)" stroke-width="1.8"/><path d="M761.7 423.2 H757.6 V427" fill="none" stroke="#9aa2a8" stroke-width="1.2"/><path d="M748.8 418.2 L752 421.4 L758.4 414.4" fill="none" stroke="#e6eaee" stroke-width="1.7"/><path d="M763.2 431.6 H770.4 L766.8 434.6 Z" fill="#000"/></svg><span style="left:-7px;font-size:5.8px;bottom:2.6px;color:#7d97a6">Quality</span></div>

  <!-- DOCK -->
  <div class="dtitle" style="top:21px;background:#0e161d;line-height:17px">Navigation<svg width="18" height="8" viewBox="0 0 18 8"><rect x="0.5" y="2.5" width="3.5" height="4" fill="none" stroke="#05090d" stroke-width="1"/><path d="M2 2.5V0.8H5.6V4.6H4" fill="none" stroke="#05090d" stroke-width="1"/><path d="M10.5 1 L16 7 M16 1 L10.5 7" stroke="#05090d" stroke-width="1.2"/></svg></div>
  <div class="dock" id="navp" style="top:36px;height:133px;background:#101b24;border-top:1px solid #1b2732"></div>
  <svg class="abs" style="left:788px;top:37px" width="166" height="132" viewBox="788 37 166 132">
    <defs>
      <linearGradient id="gDial" x1="0" y1="0" x2="0" y2="1"><stop offset="0" stop-color="#33475a"/><stop offset="0.08" stop-color="#3a4f5b"/><stop offset="0.3" stop-color="#3d535f"/><stop offset="0.47" stop-color="#354a58"/><stop offset="0.54" stop-color="#2a3d49"/><stop offset="1" stop-color="#101c25"/></linearGradient>
      <linearGradient id="gRing" x1="0" y1="0" x2="0" y2="1"><stop offset="0" stop-color="#2f434f"/><stop offset="0.5" stop-color="#3d5461"/><stop offset="1" stop-color="#2a3c48"/></linearGradient>
      <linearGradient id="gArr" x1="0" y1="0" x2="0" y2="1"><stop offset="0" stop-color="#9ad4f2"/><stop offset="1" stop-color="#4684a8"/></linearGradient>
      <clipPath id="cDial"><ellipse cx="867.3" cy="100.5" rx="57.3" ry="52.7"/></clipPath>
      <path id="arcTop" d="M 842.8 100.6 A 24.5 24.5 0 0 1 891.8 100.6"/>
      <path id="arcBot" d="M 838.1 100.6 A 29.2 29.2 0 0 0 896.5 100.6"/>
    </defs>
    <ellipse cx="867.3" cy="100.5" rx="60" ry="55.4" fill="#000"/>
    <ellipse cx="867.3" cy="100.5" rx="57.3" ry="52.7" fill="url(#gDial)"/>
    <rect x="808" y="97.3" width="120" height="6.2" fill="#3c5360" clip-path="url(#cDial)"/>
    <circle cx="867.4" cy="100.3" r="31.4" fill="url(#gRing)"/>
    <circle cx="867.3" cy="100.6" r="22.8" fill="#4b6373"/>
    <circle cx="867.3" cy="100.8" r="21.6" fill="#000"/>
    <text font-family="Liberation Sans, sans-serif" font-size="7.2" fill="#46aee0" text-anchor="middle"><textPath href="#arcTop" startOffset="50%">Slice No.</textPath></text>
    <text font-family="Liberation Sans, sans-serif" font-size="6.8" fill="#2f9ad6" text-anchor="middle"><textPath href="#arcBot" startOffset="50%">No of slice per frame</textPath></text>
    <text x="867.2" y="96" font-family="DejaVu Sans Condensed, DejaVu Sans, sans-serif" font-size="9.2" fill="#35b5dc" text-anchor="middle">256</text>
    <rect x="850.2" y="99.5" width="35.2" height="1.1" fill="#1f86b8"/>
    <text x="867.6" y="117.6" font-family="DejaVu Sans Condensed, DejaVu Sans, sans-serif" font-size="12.6" font-weight="700" fill="#2fc6ee" text-anchor="middle">1</text>
    <!-- chevrons -->
    <path d="M837.4 68.5 L831.8 68.5 L822.8 77.5 L831.8 86.3 L837.4 86.3 L829.8 77.5 Z" fill="url(#gArr)"/>
    <path d="M897.8 68.5 L903.4 68.5 L912.4 77.5 L903.4 86.3 L897.8 86.3 L905.4 77.5 Z" fill="url(#gArr)"/>
    <!-- rewind / ff -->
    <path d="M825.3 127.1 L832.4 122.2 V132 Z M832.9 127.1 L840 122.2 V132 Z" fill="#6eaccc"/>
    <path d="M910.6 127.1 L903.5 122.2 V132 Z M903 127.1 L895.9 122.2 V132 Z" fill="#6eaccc"/>
    <!-- pause -->
    <rect x="862.6" y="137" width="3.9" height="10.2" fill="url(#gArr)"/><rect x="869" y="137" width="3.9" height="10.2" fill="url(#gArr)"/>
  </svg>
  <div class="dtitle" style="top:172px;height:15px;line-height:16.2px">Utility<svg width="18" height="8" viewBox="0 0 18 8"><rect x="0.5" y="2.5" width="3.5" height="4" fill="none" stroke="#05090d" stroke-width="1"/><path d="M2 2.5V0.8H5.6V4.6H4" fill="none" stroke="#05090d" stroke-width="1"/><path d="M10.5 1 L16 7 M16 1 L10.5 7" stroke="#05090d" stroke-width="1.2"/></svg></div>
  <div class="abs" style="left:788px;top:187px;width:166px;height:2px;background:#0b1116"></div>
  <div class="dock" id="utilp" style="top:189px;height:292px"></div>
  <div class="abs" style="left:796px;top:196px;width:150px;height:277px;background:#17222c;border:1px solid #131c24"></div>
  <div class="lbl" style="left:806px;top:214.5px">Hounsfield Unit</div>
  <div class="tbox" style="left:804px;top:229px;width:50px">Value</div>
  <div class="tbox" style="left:857px;top:229px;width:81px">Description</div>
  <div class="lbl" style="left:804px;top:257.5px">Zoom</div>
  <div class="pill" style="left:804.5px;top:268px;width:125.5px;height:36.5px;border-radius:18.5px"></div>
  <div class="cb on" style="left:811px;top:268.6px;width:35.4px;height:35.4px"><svg width="35" height="35" viewBox="0 0 35 35"><path d="M8.6 24.6 L14.2 19.6" stroke="#5ba8d0" stroke-width="3.3" stroke-linecap="round"/><circle cx="20.4" cy="13.9" r="6.6" fill="none" stroke="#82cdf0" stroke-width="1.6"/><path d="M16.8 13.9 H24 M20.4 10.3 V17.5" stroke="#aee0f8" stroke-width="1.5"/></svg></div>
  <div class="cb on" style="left:850.2px;top:268.6px;width:35.4px;height:35.4px"><svg width="35" height="35" viewBox="0 0 35 35"><path d="M8.6 24.6 L14.2 19.6" stroke="#5ba8d0" stroke-width="3.3" stroke-linecap="round"/><circle cx="20.4" cy="13.9" r="6.6" fill="none" stroke="#82cdf0" stroke-width="1.6"/><path d="M16.8 13.9 H24" stroke="#aee0f8" stroke-width="1.5"/></svg></div>
  <div class="cb off" style="left:889px;top:268.6px;width:35.4px;height:35.4px"><svg width="35" height="35" viewBox="0 0 35 35"><path d="M8.6 24.6 L14.2 19.6" stroke="#565f66" stroke-width="3.3" stroke-linecap="round"/><circle cx="20.4" cy="13.9" r="6.6" fill="none" stroke="#4d575f" stroke-width="1.6"/><text x="20.4" y="16.4" font-family="Liberation Sans, sans-serif" font-size="7.6" font-weight="700" fill="#5c666e" text-anchor="middle">%</text></svg></div>
  <div class="lbl" style="left:809px;top:310.5px">Rotate</div>
  <svg class="abs" style="left:800px;top:312px" width="142" height="48" viewBox="800 312 142 48">
    <path d="M822.8 319.8 H902.9 A20.6 20.6 0 1 1 916.8 355.6 H822.8 A17.9 17.9 0 0 1 822.8 319.8 Z" fill="#04101a" stroke="#1e3344" stroke-width="1"/>
  </svg>
  <div class="cb off" style="left:811.3px;top:320.6px;width:34.6px;height:34.6px"><svg width="34" height="34" viewBox="0 0 34 34"><path d="M11.2 20.5 A7.2 7.2 0 1 1 22 22.8" fill="none" stroke="#626e77" stroke-width="2.9"/><path d="M6.8 17.2 L15.2 17.6 L10.6 23.6 Z" fill="#626e77"/></svg></div>
  <div class="cb off" style="left:853.6px;top:320.6px;width:34.6px;height:34.6px"><svg width="34" height="34" viewBox="0 0 34 34"><path d="M11.2 20.5 A7.2 7.2 0 1 1 22 22.8" fill="none" stroke="#626e77" stroke-width="2.9"/><path d="M6.8 17.2 L15.2 17.6 L10.6 23.6 Z" fill="#626e77"/></svg></div>
  <svg class="abs" style="left:895px;top:312px" width="46" height="46" viewBox="895 312 46 46">
    <defs><path id="arcAng" d="M 905.5 328.5 A 13 13 0 1 1 919.06 347.8"/></defs>
    <circle cx="916.8" cy="335" r="10.6" fill="#0f161c" stroke="#34434d" stroke-width="0.9"/>
    <text font-family="Liberation Sans, sans-serif" font-size="7.8" fill="#1a90de" textLength="51" lengthAdjust="spacingAndGlyphs"><textPath href="#arcAng" startOffset="0" textLength="51" lengthAdjust="spacingAndGlyphs">Angle of Rotation (φ)</textPath></text>
    <text x="916.8" y="337.2" font-family="Liberation Sans, sans-serif" font-size="7" font-weight="700" fill="#1f9fd4" text-anchor="middle">-</text>
  </svg>
  <div class="lbl" style="left:809px;top:362.5px">Flip</div>
  <svg class="abs" style="left:800px;top:370px" width="142" height="40" viewBox="800 370 142 40">
    <path d="M821.5 373 H880 L922 379.2 A14.3 14.3 0 0 1 922 406.6 H821.5 A16.8 16.8 0 0 1 821.5 373 Z" fill="#04101a" stroke="#1e3344" stroke-width="1"/>
  </svg>
  <div class="cb off" style="left:811.5px;top:373px;width:34px;height:34px"><svg width="34" height="34" viewBox="0 0 34 34"><rect x="7.4" y="11.8" width="7" height="10.2" fill="none" stroke="#5b6770" stroke-width="1.5"/><path d="M17.6 8.5 V25.5" stroke="#5b6770" stroke-width="1.5"/><rect x="20.4" y="11.8" width="7" height="10.2" fill="none" stroke="#5b6770" stroke-width="1.3" stroke-dasharray="1.2 1.2"/></svg></div>
  <div class="cb off" style="left:854px;top:373px;width:34px;height:34px"><svg width="34" height="34" viewBox="0 0 34 34"><rect x="11.6" y="6.6" width="11.6" height="6.6" fill="none" stroke="#5b6770" stroke-width="1.5"/><path d="M8.5 16.6 H26" stroke="#5b6770" stroke-width="1.5"/><rect x="11.6" y="19.8" width="11.6" height="6.6" fill="none" stroke="#5b6770" stroke-width="1.3" stroke-dasharray="1.2 1.2"/></svg></div>
  <div class="cb off" style="left:906.5px;top:379.5px;width:27px;height:27px"><svg width="27" height="27" viewBox="0 0 27 27"><path d="M18.6 9.2 A6.4 6.4 0 1 0 19.6 16.2" fill="none" stroke="#59656e" stroke-width="2"/></svg></div>
  <div class="ub on" style="left:804.1px;top:420.4px;width:63.6px;padding-top:5.3px"><i></i><span style="padding-left:2px">Glow</span></div>
  <div class="ub on" style="left:871px;top:420.4px;width:63.8px;padding-top:5.3px"><i></i><span style="padding-left:2px">Intensity</span></div>
  <div class="ub off" style="left:804.1px;top:443.6px;width:63.6px;height:19.6px;padding-top:1.6px;line-height:7px"><i></i>Bump<br>Mapping</div>
  <div class="ub off" style="left:871px;top:443.6px;width:63.8px;height:19.6px;padding-top:1.6px;line-height:7px"><i></i>Invert<br>Color</div>
  <div class="dtitle" style="top:485px;height:14px;padding-left:2.5px;line-height:15.8px;letter-spacing:-0.08px;overflow:hidden">Collaboration<svg style="top:3px" width="18" height="8" viewBox="0 0 18 8"><rect x="0.5" y="2.5" width="3.5" height="4" fill="none" stroke="#05090d" stroke-width="1"/><path d="M2 2.5V0.8H5.6V4.6H4" fill="none" stroke="#05090d" stroke-width="1"/><path d="M10.5 1 L16 7 M16 1 L10.5 7" stroke="#05090d" stroke-width="1.2"/></svg></div>
  <div class="dock" id="collp" style="top:501px;height:127.5px"></div>
  <div class="abs" style="left:795px;top:508px;width:152px;height:114px;background:#121c25;border:1px solid #18232d"></div>
  <div class="abs" style="left:798px;top:554.3px;width:140px;letter-spacing:0.03px;text-align:center;font-family:'DejaVu Sans Condensed','DejaVu Sans',sans-serif;font-size:10px;line-height:12.2px;color:#d2dae0">No user is available for<br>collaboration.</div>
  <svg class="abs" style="left:934px;top:508px" width="14" height="116" viewBox="934 508 14 116">
    <rect x="935.8" y="509.6" width="10.4" height="11.8" rx="1.5" fill="#1a2630"/>
    <path d="M937.8 518 L944.2 518 L941 512.6 Z" fill="#2fd0e6"/>
    <rect x="938" y="524" width="5.6" height="80.5" rx="1" fill="#485a66"/>
    <rect x="935.8" y="608.4" width="10.4" height="12.6" rx="1.5" fill="#1a2630"/>
    <path d="M937.8 612 L944.2 612 L941 617.4 Z" fill="#2fd0e6"/>
  </svg>
  <svg class="abs" style="left:944px;top:636px" width="9" height="9" viewBox="0 0 9 9"><g fill="#9aa4ac"><rect x="6" y="0.5" width="1.5" height="1.5"/><rect x="6" y="3" width="1.5" height="1.5"/><rect x="3.5" y="3" width="1.5" height="1.5"/><rect x="6" y="5.5" width="1.5" height="1.5"/><rect x="3.5" y="5.5" width="1.5" height="1.5"/><rect x="1" y="5.5" width="1.5" height="1.5"/></g></svg>
</div>
</body>
</html>
